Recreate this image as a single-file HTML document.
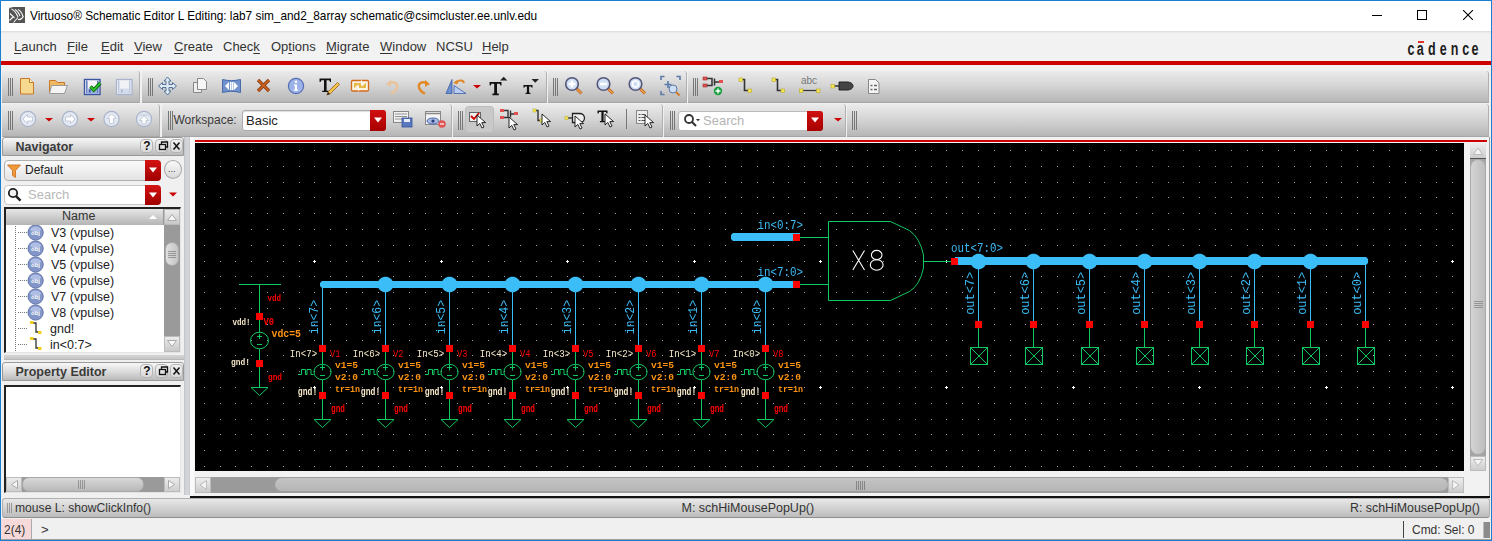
<!DOCTYPE html><html><head><meta charset="utf-8"><style>
*{box-sizing:border-box}
body{margin:0;width:1492px;height:541px;overflow:hidden;position:relative;background:#f0f0f0;font-family:'Liberation Sans', sans-serif;color:#222}
.a{position:absolute}
.tb{position:absolute;background:linear-gradient(#ebebeb,#d6d6d6 45%,#b6b6b6);border-bottom:1px solid #a6a6a6;border-right:1px solid #b0b0b0;border-radius:3px 3px 0 0}
.grip{position:absolute;width:5px;border-left:1px solid #777;border-right:1px solid #777}
.grip:after{content:'';position:absolute;left:1px;top:0;bottom:0;width:1px;background:#777}
.menu span{position:absolute;top:0;font-size:13px;color:#333}
.u{text-decoration:underline;text-underline-offset:2px}
.hdr{position:absolute;background:linear-gradient(#f7f7f7,#dcdcdc 50%,#bababa);border:1px solid #9a9a9a;border-radius:3px;font-weight:bold;font-size:12.5px;color:#3a3a3a}
.sbtn{position:absolute;width:15px;height:15px;border:1px solid #999;border-radius:3px;background:linear-gradient(#fafafa,#d6d6d6)}
</style></head><body>

<div class="a" style="left:0;top:0;width:1492px;height:541px;border:1px solid #1a7fd0;z-index:50;pointer-events:none"></div>
<div class="a" style="left:0;top:0;width:1492px;height:31px;background:#fff"></div>
<div class="a" style="left:0;top:31px;width:1492px;height:30px;background:linear-gradient(#d6d6d6,#e8e8e8 1px,#f2f2f2 3px)"></div>
<svg class="a" style="left:9px;top:7px" width="16" height="16" viewBox="0 0 16 16">
<rect width="16" height="16" fill="#545454"/>
<path d="M0 1.5L4 0H0z" fill="#ddd"/>
<path d="M1 6.5L5.5 11M0.5 13.5L4 10M4.5 15.5L9 10.5" stroke="#f4f4f4" stroke-width="1.1" fill="none"/>
<path d="M2.5 2C5 3 7 5 9 10M6 2.5C8 3.5 9.5 5.5 11 9M9 2.5C11 3.5 13 6 14 9.5M9 12.5C11 13 13 12 14.5 9" stroke="#f4f4f4" stroke-width="1.1" fill="none"/>
</svg>
<div class="a" style="left:30px;top:8px;font-size:13px;color:#000;white-space:nowrap;transform:scaleX(0.909);transform-origin:0 0">Virtuoso® Schematic Editor L Editing: lab7 sim_and2_8array schematic@csimcluster.ee.unlv.edu</div>
<div class="a" style="left:1372px;top:15px;width:10px;height:1px;background:#000"></div>
<div class="a" style="left:1417px;top:10px;width:10px;height:10px;border:1px solid #000"></div>
<svg class="a" style="left:1463px;top:10px" width="10" height="10" viewBox="0 0 10 10"><path d="M0 0L10 10M10 0L0 10" stroke="#000" stroke-width="1.1"/></svg>
<div class="a menu" style="left:0;top:31px;width:1492px;height:30px">
<span style="left:14px;top:8px"><span class="u" style="position:static">L</span>aunch</span>
<span style="left:67px;top:8px"><span class="u" style="position:static">F</span>ile</span>
<span style="left:101px;top:8px"><span class="u" style="position:static">E</span>dit</span>
<span style="left:134px;top:8px"><span class="u" style="position:static">V</span>iew</span>
<span style="left:174px;top:8px"><span class="u" style="position:static">C</span>reate</span>
<span style="left:223px;top:8px">Chec<span class="u" style="position:static">k</span></span>
<span style="left:271px;top:8px">Op<span class="u" style="position:static">t</span>ions</span>
<span style="left:326px;top:8px"><span class="u" style="position:static">M</span>igrate</span>
<span style="left:380px;top:8px"><span class="u" style="position:static">W</span>indow</span>
<span style="left:436px;top:8px">NCSU</span>
<span style="left:482px;top:8px"><span class="u" style="position:static">H</span>elp</span>
</div>
<svg class="a" style="left:1400px;top:34px" width="90" height="26" viewBox="1400 34 90 26"><text transform="translate(1407.4 54.8) scale(0.66 1)" font-size="19" font-weight="bold" fill="#1c1c1c" font-family="Liberation Sans">c</text><text transform="translate(1416.8 54.8) scale(0.66 1)" font-size="19" font-weight="bold" fill="#1c1c1c" font-family="Liberation Sans">a</text><text transform="translate(1427.9 54.8) scale(0.66 1)" font-size="19" font-weight="bold" fill="#1c1c1c" font-family="Liberation Sans">d</text><text transform="translate(1439.7 54.8) scale(0.66 1)" font-size="19" font-weight="bold" fill="#1c1c1c" font-family="Liberation Sans">e</text><text transform="translate(1450.8 54.8) scale(0.66 1)" font-size="19" font-weight="bold" fill="#1c1c1c" font-family="Liberation Sans">n</text><text transform="translate(1462.3 54.8) scale(0.66 1)" font-size="19" font-weight="bold" fill="#1c1c1c" font-family="Liberation Sans">c</text><text transform="translate(1471.6 54.8) scale(0.66 1)" font-size="19" font-weight="bold" fill="#1c1c1c" font-family="Liberation Sans">e</text><rect x="1418" y="41" width="6" height="2" fill="#e03030"/></svg>
<div class="a" style="left:0;top:61px;width:1492px;height:4px;background:#cc0000"></div>
<div class="tb" style="left:2px;top:71px;width:138px;height:32px"></div>
<div class="tb" style="left:142px;top:71px;width:405px;height:32px"></div>
<div class="tb" style="left:548px;top:71px;width:139px;height:32px"></div>
<div class="tb" style="left:688px;top:71px;width:801px;height:32px"></div>
<div class="grip" style="left:8px;top:78px;height:18px"></div>
<div class="grip" style="left:148px;top:78px;height:18px"></div>
<div class="grip" style="left:553px;top:78px;height:18px"></div>
<div class="grip" style="left:693px;top:78px;height:18px"></div>
<div class="tb" style="left:2px;top:104px;width:158px;height:33px"></div>
<div class="tb" style="left:162px;top:104px;width:290px;height:33px"></div>
<div class="tb" style="left:453px;top:104px;width:210px;height:33px"></div>
<div class="tb" style="left:664px;top:104px;width:182px;height:33px"></div>
<div class="tb" style="left:847px;top:104px;width:642px;height:33px"></div>
<div class="grip" style="left:8px;top:111px;height:19px"></div>
<div class="grip" style="left:168px;top:111px;height:19px"></div>
<div class="grip" style="left:458px;top:111px;height:19px"></div>
<div class="grip" style="left:670px;top:111px;height:19px"></div>
<div class="grip" style="left:852px;top:111px;height:19px"></div>
<svg class="a" style="left:0;top:0" width="1492" height="140" viewBox="0 0 1492 140"><path d="M20.5 78.5h9l4 4v11.5h-13z" fill="#f4d98f" stroke="#c8782a"/><path d="M29.5 78.5v4h4" fill="#fff3c8" stroke="#c8782a"/><path d="M49.5 80.5h6l2 2h7v10h-15z" fill="#f0b860" stroke="#c8782a"/><path d="M51.5 85.5h16l-3 8h-15z" fill="#f4f4f4" stroke="#999"/><rect x="84.5" y="79.5" width="15.5" height="15" fill="#f4f4f8" stroke="#3a56a0" stroke-width="1.4"/><rect x="86" y="80.5" width="1.6" height="13" fill="#6a82c4"/><rect x="97" y="80.5" width="1.6" height="13" fill="#6a82c4"/><rect x="87" y="88.5" width="10" height="5.5" fill="#9cb0e0"/><rect x="89" y="89.5" width="1.6" height="3" fill="#3a56a0"/><path d="M90.5 86.5l3.3 3.5 6.5-7" stroke="#0a6a0a" stroke-width="3.4" fill="none"/><path d="M90.5 86.5l3.3 3.5 6.5-7" stroke="#2ec82e" stroke-width="1.8" fill="none"/><rect x="116.5" y="79.5" width="15.5" height="15" fill="#f0f2f6" stroke="#aab4cc" stroke-width="1.3"/><rect x="118" y="80.5" width="1.5" height="13" fill="#c0cade"/><rect x="129" y="80.5" width="1.5" height="13" fill="#c0cade"/><rect x="119" y="88.5" width="10" height="5.5" fill="#d4dcec"/><rect x="121" y="89.5" width="1.5" height="3" fill="#aab4cc"/><path d="M167.5 77l3.5 4h-2v3.5h3.5v-2l4 3.5-4 3.5v-2h-3.5v3.5h2l-3.5 4-3.5-4h2v-3.5h-3.5v2l-4-3.5 4-3.5v2h3.5v-3.5h-2z" fill="#dfe8f2" stroke="#4f7499" stroke-width="1"/><path d="M193.5 82.5h8v10h-8z" fill="#eee" stroke="#888"/><path d="M197.5 78.5h6l3 3v8h-9z" fill="#f6f6f6" stroke="#888"/><path d="M222.5 79.5c6 1.5 12 1.5 18 0v13c-6-1.5-12-1.5-18 0z" fill="#6f92cf" stroke="#4a6aa8"/><path d="M225 86l4-4v8z M238 86l-4-4v8z" fill="#fff"/><rect x="230" y="82" width="1.5" height="8" fill="#fff"/><rect x="232" y="82" width="1.5" height="8" fill="#fff"/><path d="M258 80l11 11M269 80l-11 11" stroke="#8a3a10" stroke-width="3.2"/><path d="M258 80l11 11M269 80l-11 11" stroke="#d0651f" stroke-width="1.6"/><circle cx="296" cy="86" r="7.6" fill="#9db2e6" stroke="#5670b5" stroke-width="1.2"/><circle cx="296" cy="81.8" r="1.3" fill="#fff"/><path d="M294 84.5h3v5h1.2v1.3h-4.5v-1.3h1.2v-3.7h-0.9z" fill="#fff"/><path d="M319.5 78.5h11.5v3.5h-1l-0.8-1.8h-2.6v10.5h1.8v1.3h-6.2v-1.3h1.8v-10.5h-2.6l-0.8 1.8h-1z" fill="#111"/><path d="M327 95l1-3 9.5-9.5 2 2-9.5 9.5z" fill="#f3c64a" stroke="#9a5a1a" stroke-width="0.8"/><path d="M327 95l1-3 2 2z" fill="#222"/><rect x="351.5" y="80.5" width="17" height="10.5" rx="1.2" fill="#fbf4e0" stroke="#d46a1e" stroke-width="1.3"/><rect x="354" y="83" width="12" height="5" fill="#e8b848"/><path d="M361 79l1.8 4.5 3.5-1-4.5 4-1-3.5z M359 92l-1.8-4.5-3.5 1 4.5-4 1 3.5z" fill="#fff"/><path d="M389 83.5c5-3 9 0 8 4-1 3-3 5-6 6" stroke="#e8c49c" stroke-width="2.4" fill="none"/><path d="M386 84l5-4v7z" fill="#e8c49c"/><path d="M427 83.5c-5-3-9 0-8 4 1 3 3 5 6 6" stroke="#e08a2a" stroke-width="2.4" fill="none"/><path d="M430 84l-5-4v7z" fill="#e08a2a"/><path d="M446 93.5l6-14v14z" fill="#6b8fd0" stroke="#3e5ea8" stroke-width="0.8"/><path d="M454 93.5v-8l12 8z" fill="#b8cdf0" stroke="#3e5ea8" stroke-width="0.8"/><path d="M456 84c1-4 7-5 8-1" stroke="#e08a2a" stroke-width="2" fill="none"/><path d="M453 83l4 -3 1 4z" fill="#e08a2a"/><path d="M473 85h8l-4 3.5z" fill="#cc0000"/><path d="M489.5 82h12v3.5h-1l-0.8-1.8h-2.7v9.8h1.8v1.8h-6.4v-1.8h1.8v-9.8h-2.7l-0.8 1.8h-1z" fill="#111"/><path d="M500 80.5l3.7-3.7 3.7 3.7z" fill="#222"/><path d="M523.5 85h9v2.8h-0.8l-0.6-1.3h-2v6.3h1.3v1.2h-4.8v-1.2h1.3v-6.3h-2l-0.6 1.3h-0.8z" fill="#111"/><path d="M531.5 79h7.5l-3.75 3.7z" fill="#222"/><path d="M576 88l5.5 5.5" stroke="#b8621c" stroke-width="3"/><path d="M576 88l5.5 5.5" stroke="#f0a050" stroke-width="1.4"/><circle cx="572" cy="84" r="6.3" fill="#cfe0f4" stroke="#557" stroke-width="1.6"/><path d="M572 80.5v7M568.5 84h7" stroke="#fff" stroke-width="2.6"/><path d="M572 80.5v7M568.5 84h7" stroke="#4a6ab0" stroke-width="0.6" fill="none" opacity="0"/><path d="M607.5 88l5.5 5.5" stroke="#b8621c" stroke-width="3"/><path d="M607.5 88l5.5 5.5" stroke="#f0a050" stroke-width="1.4"/><circle cx="603.5" cy="84" r="6.3" fill="#cfe0f4" stroke="#557" stroke-width="1.6"/><path d="M600 84h7" stroke="#fff" stroke-width="2.6"/><path d="M639.5 88l5.5 5.5" stroke="#b8621c" stroke-width="3"/><path d="M639.5 88l5.5 5.5" stroke="#f0a050" stroke-width="1.4"/><circle cx="635.5" cy="84" r="6.3" fill="#cfe0f4" stroke="#557" stroke-width="1.6"/><circle cx="635.5" cy="84" r="3" fill="none" stroke="#fff" stroke-width="1.6"/><path d="M661 80v-3.5h3.5M676.5 76.5h3.5v3.5M661 91v3.5h3.5" stroke="#5a7aa8" stroke-width="1.6" fill="none"/><path d="M668 81v7M664.5 84.5h7" stroke="#5a7aa8" stroke-width="1.6"/><circle cx="673" cy="89" r="4" fill="#cfe0f4" stroke="#5a7aa8"/><path d="M676 92l3.5 3.5" stroke="#d07a2a" stroke-width="2"/><rect x="703" y="77" width="4" height="3" fill="#e05050" stroke="#a03030" stroke-width="0.6"/><rect x="703" y="84" width="4" height="3" fill="#e05050" stroke="#a03030" stroke-width="0.6"/><path d="M707 78.5h5v7h-5M712 78.5v7M714.5 78.5v7M714.5 82h5" stroke="#333" stroke-width="1.5" fill="none"/><rect x="719" y="80" width="4" height="3" fill="#e05050"/><circle cx="718" cy="91" r="4.2" fill="#1aa040"/><path d="M718 88.5v5M715.5 91h5" stroke="#fff" stroke-width="1.4"/><path d="M741 79.5h3.5v11h5" stroke="#333" stroke-width="1.6" fill="none"/><rect x="739" y="78" width="3.5" height="3.5" fill="#f5e65a" stroke="#b8a820" stroke-width="0.6"/><rect x="748" y="89" width="3.5" height="3.5" fill="#f5e65a" stroke="#b8a820" stroke-width="0.6"/><path d="M774 79.5h3.5v11h5" stroke="#333" stroke-width="1.6" fill="none"/><rect x="772" y="78" width="3.5" height="3.5" fill="#f5e65a" stroke="#b8a820" stroke-width="0.6"/><rect x="781" y="89" width="3.5" height="3.5" fill="#f5e65a" stroke="#b8a820" stroke-width="0.6"/><text x="801" y="84" font-size="10" fill="#777" font-family="Liberation Sans">abc</text><path d="M802 90.5h16" stroke="#333" stroke-width="1.2"/><rect x="799.5" y="89" width="3.5" height="3.5" fill="#f5e65a" stroke="#b8a820" stroke-width="0.6"/><rect x="816.5" y="89" width="3.5" height="3.5" fill="#f5e65a" stroke="#b8a820" stroke-width="0.6"/><path d="M834 86h5" stroke="#333" stroke-width="1.5"/><rect x="831" y="84.5" width="3.5" height="3.5" fill="#f5e65a" stroke="#b8a820" stroke-width="0.6"/><path d="M839 82h8c4 0 6 2 6 4s-2 4-6 4h-8z" fill="#444" stroke="#222"/><path d="M868.5 79.5h7l3.5 3.5v10.5h-10.5z" fill="#f4f4f4" stroke="#888"/><path d="M870.5 85.5h2M874 85.5h3M870.5 89.5h2M874 89.5h3" stroke="#666" stroke-width="1.6"/><circle cx="28" cy="119" r="7.6" fill="#e4e8f0" stroke="#a8b4cc" stroke-width="1.2"/><path d="M23 119l4.5-4.5v2.5h5v4h-5v2.5z" fill="#fff" stroke="#b0bad0" stroke-width="0.7"/><path d="M45 118h8l-4 3.5z" fill="#cc0000"/><circle cx="70" cy="119" r="7.6" fill="#e4e8f0" stroke="#a8b4cc" stroke-width="1.2"/><path d="M75 119l-4.5-4.5v2.5h-5v4h5v2.5z" fill="#fff" stroke="#b0bad0" stroke-width="0.7"/><path d="M87 118h8l-4 3.5z" fill="#cc0000"/><circle cx="111.5" cy="119" r="7.6" fill="#e4e8f0" stroke="#a8b4cc" stroke-width="1.2"/><path d="M111.5 114l4.5 4.5h-2.5v5h-4v-5h-2.5z" fill="#fff" stroke="#b0bad0" stroke-width="0.7"/><circle cx="144" cy="119" r="7.6" fill="#e4e8f0" stroke="#a8b4cc" stroke-width="1.2"/><path d="M139.5 115h9M144 116l4.5 4.5h-2.5v3.5h-4v-3.5h-2.5z" fill="#fff" stroke="#b0bad0" stroke-width="0.7"/><rect x="393.5" y="111.5" width="15" height="11" fill="#f2f2f2" stroke="#888"/><path d="M395 114h12M395 116.5h12M395 119h9" stroke="#888" stroke-width="0.9"/><rect x="402" y="118" width="10" height="9" fill="#5a78c0" stroke="#34509a" stroke-width="0.8"/><rect x="404" y="119" width="6" height="3" fill="#e8eef8"/><rect x="425.5" y="111.5" width="15" height="13" fill="#f4f4f4" stroke="#888"/><path d="M425.5 113.5h15" stroke="#888" stroke-width="1.5"/><ellipse cx="433" cy="121" rx="6" ry="3" fill="#a8b8e0" stroke="#4a6ab0"/><circle cx="433" cy="121" r="1.6" fill="#2a3a80"/><circle cx="442" cy="124" r="3.8" fill="#e05555"/><path d="M440 124h4" stroke="#fff" stroke-width="1.2"/><rect x="465.5" y="106.5" width="28" height="26" rx="3" fill="#c9c9c9" stroke="#bdbdbd"/><rect x="469.5" y="112.5" width="11" height="9" fill="#f0f0f0" stroke="#666"/><path d="M471 116l3 3 5-6" stroke="#cc0000" stroke-width="1.8" fill="none"/><path d="M477 115v11l2.8-2.6 2.2 4.6 2-1-2.2-4.4h3.8z" fill="#fff" stroke="#111" stroke-width="0.9"/><rect x="500" y="109" width="4" height="3" fill="#e05050"/><rect x="500" y="116" width="4" height="3" fill="#e05050"/><path d="M504 110.5h4v7h-4M508 110.5v7M510.5 110.5v7M510.5 114h4" stroke="#333" stroke-width="1.4" fill="none"/><rect x="514" y="112" width="4" height="3" fill="#e05050"/><path d="M509 117v11l2.8-2.6 2.2 4.6 2-1-2.2-4.4h3.8z" fill="#fff" stroke="#111" stroke-width="0.9"/><path d="M535 110.5h3v10h3" stroke="#333" stroke-width="1.4" fill="none"/><rect x="533" y="109" width="3" height="3" fill="#f5e65a" stroke="#b8a820" stroke-width="0.5"/><rect x="540" y="119" width="3" height="3" fill="#f5e65a" stroke="#b8a820" stroke-width="0.5"/><path d="M542 114v11l2.8-2.6 2.2 4.6 2-1-2.2-4.4h3.8z" fill="#fff" stroke="#111" stroke-width="0.9"/><path d="M568 118h5" stroke="#333" stroke-width="1.4"/><rect x="565" y="116.5" width="3" height="3" fill="#f5e65a" stroke="#b8a820" stroke-width="0.5"/><path d="M572.5 113.5h7c3 0 5 2 5 4.5s-2 4.5-5 4.5h-7z" fill="#eee" stroke="#222" stroke-width="1.3"/><path d="M575 116v11l2.8-2.6 2.2 4.6 2-1-2.2-4.4h3.8z" fill="#fff" stroke="#111" stroke-width="0.9"/><path d="M597.5 110.5h10v3h-1l-0.6-1.5h-2.3v9h1.5v1.2h-5.2v-1.2h1.5v-9h-2.3l-0.6 1.5h-1z" fill="#111"/><path d="M605 114v11l2.8-2.6 2.2 4.6 2-1-2.2-4.4h3.8z" fill="#fff" stroke="#111" stroke-width="0.9"/><rect x="626" y="109" width="1" height="20" fill="#777"/><rect x="636.5" y="110.5" width="11" height="13" fill="#eee" stroke="#888"/><path d="M638.5 114.5h2M641.5 114.5h4M638.5 117.5h2M641.5 117.5h4M638.5 120.5h2M641.5 120.5h4" stroke="#555" stroke-width="1.2"/><path d="M645 115v11l2.8-2.6 2.2 4.6 2-1-2.2-4.4h3.8z" fill="#fff" stroke="#111" stroke-width="0.9"/><path d="M834 118h8l-4 3.5z" fill="#cc0000"/></svg>
<div class="a" style="left:173.5px;top:112.5px;font-size:12px;color:#3a3a3a">Workspace:</div>
<div class="a" style="left:242px;top:110px;width:144px;height:21px;background:#fff;border:1px solid #aaa;border-radius:3px;box-shadow:inset 0 1px 1px #ddd"></div>
<div class="a" style="left:246px;top:113px;font-size:13px;color:#222">Basic</div>
<div class="a" style="left:370px;top:110px;width:16px;height:21px;background:linear-gradient(#d01010,#a80000);border-radius:0 3px 3px 0"></div>
<svg class="a" style="left:373px;top:117px" width="10" height="6"><path d="M1 0.5h8l-4 5z" fill="#fff"/></svg>
<div class="a" style="left:678px;top:111px;width:145px;height:20px;background:#fff;border:1px solid #bbb;border-radius:3px"></div>
<svg class="a" style="left:683px;top:113px" width="18" height="15"><circle cx="6" cy="6" r="4" fill="none" stroke="#333" stroke-width="1.8"/><path d="M9 9l4 4" stroke="#333" stroke-width="2.2"/><path d="M13 6h4l-2 2.2z" fill="#333"/></svg>
<div class="a" style="left:703px;top:113px;font-size:13px;color:#b4b4b4">Search</div>
<div class="a" style="left:807px;top:111px;width:16px;height:20px;background:linear-gradient(#d01010,#a80000);border-radius:0 3px 3px 0"></div>
<svg class="a" style="left:810px;top:117px" width="10" height="6"><path d="M1 0.5h8l-4 5z" fill="#fff"/></svg>
<div class="hdr" style="left:2px;top:137px;width:182px;height:19px;border-radius:3px 3px 0 0"><span class="a" style="left:12.5px;top:2px">Navigator</span></div>
<div class="sbtn" style="left:139.5px;top:139px;width:13px;height:14px;border-radius:4px;border-color:#b4b4b4;background:linear-gradient(#f2f2f2,#d8d8d8)"></div>
<div class="sbtn" style="left:154.5px;top:139px;width:13px;height:14px;border-radius:4px;border-color:#b4b4b4;background:linear-gradient(#f2f2f2,#d8d8d8)"></div>
<div class="sbtn" style="left:169.5px;top:139px;width:13px;height:14px;border-radius:4px;border-color:#b4b4b4;background:linear-gradient(#f2f2f2,#d8d8d8)"></div>
<svg class="a" style="left:140px;top:139px" width="44" height="14" viewBox="0 0 44 14">
<text x="3.2" y="11.2" font-size="12" font-weight="bold" fill="#111" font-family="Liberation Sans">?</text>
<rect x="19.5" y="5.5" width="6" height="5" fill="none" stroke="#111" stroke-width="1.3"/><path d="M21.5 5.5v-2.5h6v5h-2" fill="none" stroke="#111" stroke-width="1.3"/>
<path d="M33.5 3.5l6 7M39.5 3.5l-6 7" stroke="#111" stroke-width="1.5"/></svg>
<div class="a" style="left:4px;top:160px;width:157px;height:21px;border:1px solid #b0b0b0;border-radius:4px;background:linear-gradient(#fafafa,#e4e4e4)"></div>
<svg class="a" style="left:6px;top:163px" width="16" height="16"><path d="M1.5 2h13l-5 5.5v7l-3-2v-5z" fill="#f09a3a" stroke="#c86a1a" stroke-width="0.8"/></svg>
<div class="a" style="left:25px;top:163px;font-size:12px;color:#222">Default</div>
<div class="a" style="left:145px;top:160px;width:16px;height:21px;background:linear-gradient(#d41212,#a00000);border-radius:0 4px 4px 0"></div>
<svg class="a" style="left:148px;top:167px" width="10" height="6"><path d="M1 0.5h8l-4 5z" fill="#fff"/></svg>
<div class="a" style="left:164px;top:160px;width:18px;height:19px;border:1px solid #a8a8a8;border-radius:50%;background:linear-gradient(#fafafa,#d8d8d8)"><span class="a" style="left:3px;top:3px;font-size:9px;color:#333">...</span></div>
<div class="a" style="left:4px;top:185px;width:157px;height:20px;border:1px solid #c8c8c8;border-radius:4px;background:#fff"></div>
<svg class="a" style="left:7px;top:187px" width="16" height="16"><circle cx="6" cy="6" r="4.2" fill="#f4f4f4" stroke="#222" stroke-width="1.8"/><path d="M9 9.2l4.5 4.5" stroke="#222" stroke-width="2.4"/></svg>
<div class="a" style="left:28px;top:187px;font-size:13px;color:#b8b8b8">Search</div>
<div class="a" style="left:145px;top:185px;width:16px;height:20px;background:linear-gradient(#d41212,#a00000);border-radius:0 4px 4px 0"></div>
<svg class="a" style="left:148px;top:192px" width="10" height="6"><path d="M1 0.5h8l-4 5z" fill="#fff"/></svg>
<svg class="a" style="left:168px;top:192px" width="10" height="6"><path d="M1 0.5h8l-4 4z" fill="#cc0000"/></svg>
<div class="a" style="left:4px;top:207px;width:177px;height:146px;background:#fff;border:1px solid #e4e4e4;border-top:2px solid #222;border-left:2px solid #222"></div>
<div class="a" style="left:6px;top:209px;width:158px;height:16px;background:linear-gradient(#e6e6e6,#b4b4b4);border-right:1px solid #999"><span class="a" style="left:56px;top:0px;font-size:12.5px;color:#333">Name</span></div>
<svg class="a" style="left:148px;top:213px" width="10" height="8"><path d="M1 6l4-4 4 4z" fill="#fff"/></svg>
<div class="a" style="left:164px;top:209px;width:16px;height:143px;background:#9a9a9a"></div>
<div class="a" style="left:164px;top:209px;width:16px;height:16px;background:linear-gradient(#ececec,#c8c8c8);border:1px solid #bbb"></div>
<svg class="a" style="left:166px;top:212px" width="12" height="10"><path d="M1.5 8.5l4.5-6 4.5 6z" fill="#f8f8f8" stroke="#aaa"/></svg>
<div class="a" style="left:164px;top:336px;width:16px;height:16px;background:linear-gradient(#ececec,#c8c8c8);border:1px solid #bbb"></div>
<svg class="a" style="left:166px;top:339px" width="12" height="10"><path d="M1.5 1.5l4.5 6 4.5-6z" fill="#f8f8f8" stroke="#aaa"/></svg>
<div class="a" style="left:165px;top:242px;width:14px;height:24px;border-radius:7px;background:linear-gradient(90deg,#e0e0e0,#c4c4c4);border:1px solid #aaa"></div>
<svg class="a" style="left:168px;top:250px" width="8" height="9"><path d="M0 1.5h8M0 3.5h8M0 5.5h8M0 7.5h8" stroke="#888" stroke-width="0.8"/></svg>
<svg class="a" style="left:0;top:0" width="200" height="541" viewBox="0 0 200 541"><clipPath id="tc"><rect x="6" y="225" width="158" height="127"/></clipPath><g clip-path="url(#tc)"><path d="M15.5 224v16" stroke="#777" stroke-dasharray="1 1" stroke-width="1"/><path d="M18 232.5h9" stroke="#777" stroke-dasharray="1 1" stroke-width="1"/><circle cx="35.6" cy="232.5" r="7.6" fill="#8296c8" stroke="#6074a8" stroke-width="1"/><ellipse cx="35.6" cy="229.5" rx="5.2" ry="3" fill="#b4c2e4" opacity="0.9"/><text x="31" y="234.5" font-size="6" fill="#fff" font-family="Liberation Sans" font-weight="bold">obj</text><text x="51" y="236.5" font-size="12.5" fill="#222" font-family="Liberation Sans">V3 (vpulse)</text><path d="M15.5 240v16" stroke="#777" stroke-dasharray="1 1" stroke-width="1"/><path d="M18 248.5h9" stroke="#777" stroke-dasharray="1 1" stroke-width="1"/><circle cx="35.6" cy="248.5" r="7.6" fill="#8296c8" stroke="#6074a8" stroke-width="1"/><ellipse cx="35.6" cy="245.5" rx="5.2" ry="3" fill="#b4c2e4" opacity="0.9"/><text x="31" y="250.5" font-size="6" fill="#fff" font-family="Liberation Sans" font-weight="bold">obj</text><text x="51" y="252.5" font-size="12.5" fill="#222" font-family="Liberation Sans">V4 (vpulse)</text><path d="M15.5 256v16" stroke="#777" stroke-dasharray="1 1" stroke-width="1"/><path d="M18 264.5h9" stroke="#777" stroke-dasharray="1 1" stroke-width="1"/><circle cx="35.6" cy="264.5" r="7.6" fill="#8296c8" stroke="#6074a8" stroke-width="1"/><ellipse cx="35.6" cy="261.5" rx="5.2" ry="3" fill="#b4c2e4" opacity="0.9"/><text x="31" y="266.5" font-size="6" fill="#fff" font-family="Liberation Sans" font-weight="bold">obj</text><text x="51" y="268.5" font-size="12.5" fill="#222" font-family="Liberation Sans">V5 (vpulse)</text><path d="M15.5 272v16" stroke="#777" stroke-dasharray="1 1" stroke-width="1"/><path d="M18 280.5h9" stroke="#777" stroke-dasharray="1 1" stroke-width="1"/><circle cx="35.6" cy="280.5" r="7.6" fill="#8296c8" stroke="#6074a8" stroke-width="1"/><ellipse cx="35.6" cy="277.5" rx="5.2" ry="3" fill="#b4c2e4" opacity="0.9"/><text x="31" y="282.5" font-size="6" fill="#fff" font-family="Liberation Sans" font-weight="bold">obj</text><text x="51" y="284.5" font-size="12.5" fill="#222" font-family="Liberation Sans">V6 (vpulse)</text><path d="M15.5 288v16" stroke="#777" stroke-dasharray="1 1" stroke-width="1"/><path d="M18 296.5h9" stroke="#777" stroke-dasharray="1 1" stroke-width="1"/><circle cx="35.6" cy="296.5" r="7.6" fill="#8296c8" stroke="#6074a8" stroke-width="1"/><ellipse cx="35.6" cy="293.5" rx="5.2" ry="3" fill="#b4c2e4" opacity="0.9"/><text x="31" y="298.5" font-size="6" fill="#fff" font-family="Liberation Sans" font-weight="bold">obj</text><text x="51" y="300.5" font-size="12.5" fill="#222" font-family="Liberation Sans">V7 (vpulse)</text><path d="M15.5 304v16" stroke="#777" stroke-dasharray="1 1" stroke-width="1"/><path d="M18 312.5h9" stroke="#777" stroke-dasharray="1 1" stroke-width="1"/><circle cx="35.6" cy="312.5" r="7.6" fill="#8296c8" stroke="#6074a8" stroke-width="1"/><ellipse cx="35.6" cy="309.5" rx="5.2" ry="3" fill="#b4c2e4" opacity="0.9"/><text x="31" y="314.5" font-size="6" fill="#fff" font-family="Liberation Sans" font-weight="bold">obj</text><text x="51" y="316.5" font-size="12.5" fill="#222" font-family="Liberation Sans">V8 (vpulse)</text><path d="M15.5 320v16" stroke="#777" stroke-dasharray="1 1" stroke-width="1"/><path d="M18 328.5h9" stroke="#777" stroke-dasharray="1 1" stroke-width="1"/><path d="M33 323h3v9h3.5" stroke="#333" stroke-width="1.3" fill="none"/><rect x="30" y="321" width="3.5" height="3" fill="#f0d020"/><rect x="38" y="331" width="3.5" height="3" fill="#f0d020"/><text x="50" y="332.5" font-size="12.5" fill="#222" font-family="Liberation Sans">gnd!</text><path d="M15.5 336v16" stroke="#777" stroke-dasharray="1 1" stroke-width="1"/><path d="M18 344.5h9" stroke="#777" stroke-dasharray="1 1" stroke-width="1"/><path d="M33 339h3v9h3.5" stroke="#333" stroke-width="1.3" fill="none"/><rect x="30" y="337" width="3.5" height="3" fill="#f0d020"/><rect x="38" y="347" width="3.5" height="3" fill="#f0d020"/><text x="50" y="348.5" font-size="12.5" fill="#222" font-family="Liberation Sans">in&lt;0:7&gt;</text></g></svg>
<div class="a" style="left:4px;top:355px;width:180px;height:5px;background:linear-gradient(#d6d6d6,#c4c4c4);border-bottom:1px solid #b8b8b8"></div>
<div class="hdr" style="left:2px;top:362px;width:182px;height:19px;border-radius:3px 3px 0 0"><span class="a" style="left:12.5px;top:2px">Property Editor</span></div>
<div class="sbtn" style="left:139.5px;top:364px;width:13px;height:14px;border-radius:4px;border-color:#b4b4b4;background:linear-gradient(#f2f2f2,#d8d8d8)"></div>
<div class="sbtn" style="left:154.5px;top:364px;width:13px;height:14px;border-radius:4px;border-color:#b4b4b4;background:linear-gradient(#f2f2f2,#d8d8d8)"></div>
<div class="sbtn" style="left:169.5px;top:364px;width:13px;height:14px;border-radius:4px;border-color:#b4b4b4;background:linear-gradient(#f2f2f2,#d8d8d8)"></div>
<svg class="a" style="left:140px;top:364px" width="44" height="14" viewBox="0 0 44 14">
<text x="3.2" y="11.2" font-size="12" font-weight="bold" fill="#111" font-family="Liberation Sans">?</text>
<rect x="19.5" y="5.5" width="6" height="5" fill="none" stroke="#111" stroke-width="1.3"/><path d="M21.5 5.5v-2.5h6v5h-2" fill="none" stroke="#111" stroke-width="1.3"/>
<path d="M33.5 3.5l6 7M39.5 3.5l-6 7" stroke="#111" stroke-width="1.5"/></svg>
<div class="a" style="left:4px;top:385px;width:177px;height:108px;background:#fff;border:1px solid #e4e4e4;border-top:2px solid #222;border-left:2px solid #222"></div>
<div class="a" style="left:6px;top:477px;width:174px;height:15px;background:#9a9a9a"></div>
<div class="a" style="left:6px;top:477px;width:16px;height:15px;background:linear-gradient(#ececec,#cfcfcf);border:1px solid #bbb"></div>
<svg class="a" style="left:8px;top:479px" width="12" height="11"><path d="M9.5 1.5l-6 4 6 4z" fill="#f8f8f8" stroke="#aaa"/></svg>
<div class="a" style="left:164px;top:477px;width:16px;height:15px;background:linear-gradient(#ececec,#cfcfcf);border:1px solid #bbb"></div>
<svg class="a" style="left:166px;top:479px" width="12" height="11"><path d="M2.5 1.5l6 4-6 4z" fill="#f8f8f8" stroke="#aaa"/></svg>
<div class="a" style="left:22px;top:477px;width:122px;height:15px;border-radius:7px;background:linear-gradient(#d8d8d8,#b8b8b8);border:1px solid #a8a8a8"></div>
<svg class="a" style="left:77px;top:480px" width="10" height="9"><path d="M1.5 0v9M3.5 0v9M5.5 0v9M7.5 0v9" stroke="#888" stroke-width="0.8"/></svg>
<div class="a" style="left:184px;top:137px;width:6px;height:358px;background:linear-gradient(90deg,#bfc2c8,#d3d5da 35%,#d3d5da 75%,#c2c4c9)"></div>
<div class="a" style="left:190px;top:137px;width:1300px;height:359px;background:#f2f2f2;border-right:1px solid #9a9a9a"></div>
<div class="a" style="left:190px;top:137px;width:4px;height:359px;background:#fafafa"></div>
<div class="a" style="left:195px;top:140px;width:1292px;height:2px;background:#cc0000"></div>
<div class="a" style="left:190px;top:496px;width:1300px;height:2px;background:#111"></div>
<div class="a" style="left:1470px;top:143px;width:16px;height:328px;background:#a4a4a4"></div>
<div class="a" style="left:1470px;top:143px;width:16px;height:16px;background:linear-gradient(#eeeeee,#cccccc);border-bottom:1px solid #555"></div>
<svg class="a" style="left:1472px;top:146px" width="12" height="10"><path d="M1.5 8.5l4.5-6.5 4.5 6.5z" fill="#f4f4f4" stroke="#bbb"/></svg>
<div class="a" style="left:1470px;top:159px;width:16px;height:296px;border-radius:8px;background:linear-gradient(90deg,#d4d4d4,#bdbdbd);border:1px solid #aaa"></div>
<svg class="a" style="left:1474px;top:300px" width="9" height="9"><path d="M0 1.5h9M0 3.5h9M0 5.5h9M0 7.5h9" stroke="#888" stroke-width="0.8"/></svg>
<div class="a" style="left:1470px;top:456px;width:16px;height:15px;background:linear-gradient(#eeeeee,#cccccc);border:1px solid #bbb"></div>
<svg class="a" style="left:1472px;top:458px" width="12" height="10"><path d="M1.5 1.5l4.5 6.5 4.5-6.5z" fill="#f4f4f4" stroke="#bbb"/></svg>
<div class="a" style="left:195px;top:477px;width:1269px;height:16px;background:#9a9a9a"></div>
<div class="a" style="left:195px;top:477px;width:16px;height:16px;background:linear-gradient(#eeeeee,#cccccc);border:1px solid #bbb"></div>
<svg class="a" style="left:197px;top:479px" width="12" height="12"><path d="M9.5 1.5l-6.5 4.5 6.5 4.5z" fill="#f4f4f4" stroke="#bbb"/></svg>
<div class="a" style="left:1448px;top:477px;width:16px;height:16px;background:linear-gradient(#eeeeee,#cccccc);border:1px solid #bbb"></div>
<svg class="a" style="left:1450px;top:479px" width="12" height="12"><path d="M2.5 1.5l6.5 4.5-6.5 4.5z" fill="#f4f4f4" stroke="#bbb"/></svg>
<div class="a" style="left:274px;top:477px;width:1174px;height:16px;border-radius:8px;background:linear-gradient(#c4c4c4,#b6b6b6);border:1px solid #9c9c9c;border-width:1px 0 2px 1px"></div>
<svg class="a" style="left:856px;top:481px" width="9" height="9"><path d="M0.5 0v9M2.5 0v9M4.5 0v9M6.5 0v9M8.5 0v9" stroke="#777" stroke-width="0.8"/></svg>
<div class="a" style="left:2px;top:498px;width:1488px;height:20px;background:linear-gradient(#e8e8e8,#bcbcbc);border:1px solid #b0b0b0;border-bottom-color:#8e8e8e;border-radius:3px"></div>
<div class="a" style="left:1px;top:539px;width:1490px;height:1px;background:#a0a0a0"></div>
<svg class="a" style="left:7px;top:503px" width="6" height="10"><path d="M0.5 0v10M2.5 0v10M4.5 0v10" stroke="#888" stroke-width="0.8"/></svg>
<div class="a" style="left:15px;top:500.5px;font-size:12.5px;color:#333;white-space:nowrap;transform:scaleX(0.97);transform-origin:0 0">mouse L: showClickInfo()</div>
<div class="a" style="left:681.5px;top:500.5px;font-size:12.5px;color:#333;white-space:nowrap">M: schHiMousePopUp()</div>
<div class="a" style="left:1349.5px;top:500.5px;font-size:12.5px;color:#333;white-space:nowrap;transform:scaleX(0.99);transform-origin:0 0">R: schHiMousePopUp()</div>
<div class="a" style="left:1px;top:519px;width:30px;height:20px;background:#f7d9d9"></div>
<div class="a" style="left:31px;top:519px;width:1px;height:20px;background:#aaa"></div>
<div class="a" style="left:3.5px;top:521.5px;font-size:13px;color:#333;transform:scaleX(0.92);transform-origin:0 0">2(4)</div>
<div class="a" style="left:41px;top:521.5px;font-size:13px;color:#333">&gt;</div>
<div class="a" style="left:1403px;top:521px;width:1px;height:17px;background:#444"></div>
<div class="a" style="left:1411.5px;top:521.8px;font-size:13px;color:#333;white-space:nowrap;transform:scaleX(0.92);transform-origin:0 0">Cmd: Sel: 0</div>
<div class="a" style="left:1483px;top:522px;width:7px;height:16px;background:#8c8c8c;border-left:1px solid #bbb"></div>
<svg class="a" style="left:195px;top:143px;background:#000;will-change:transform" width="1269" height="328" viewBox="195 143 1269 328"><path d="M204 150h1v1h-1zM204 166h1v1h-1zM204 182h1v1h-1zM204 197h1v1h-1zM204 213h1v1h-1zM204 229h1v1h-1zM204 245h1v1h-1zM204 261h1v1h-1zM204 276h1v1h-1zM204 292h1v1h-1zM204 308h1v1h-1zM204 324h1v1h-1zM204 340h1v1h-1zM204 355h1v1h-1zM204 371h1v1h-1zM204 387h1v1h-1zM204 403h1v1h-1zM204 419h1v1h-1zM204 434h1v1h-1zM204 450h1v1h-1zM204 466h1v1h-1zM220 150h1v1h-1zM220 166h1v1h-1zM220 182h1v1h-1zM220 197h1v1h-1zM220 213h1v1h-1zM220 229h1v1h-1zM220 245h1v1h-1zM220 261h1v1h-1zM220 276h1v1h-1zM220 292h1v1h-1zM220 308h1v1h-1zM220 324h1v1h-1zM220 340h1v1h-1zM220 355h1v1h-1zM220 371h1v1h-1zM220 387h1v1h-1zM220 403h1v1h-1zM220 419h1v1h-1zM220 434h1v1h-1zM220 450h1v1h-1zM220 466h1v1h-1zM235 150h1v1h-1zM235 166h1v1h-1zM235 182h1v1h-1zM235 197h1v1h-1zM235 213h1v1h-1zM235 229h1v1h-1zM235 245h1v1h-1zM235 261h1v1h-1zM235 276h1v1h-1zM235 292h1v1h-1zM235 308h1v1h-1zM235 324h1v1h-1zM235 340h1v1h-1zM235 355h1v1h-1zM235 371h1v1h-1zM235 387h1v1h-1zM235 403h1v1h-1zM235 419h1v1h-1zM235 434h1v1h-1zM235 450h1v1h-1zM235 466h1v1h-1zM251 150h1v1h-1zM251 166h1v1h-1zM251 182h1v1h-1zM251 197h1v1h-1zM251 213h1v1h-1zM251 229h1v1h-1zM251 245h1v1h-1zM251 261h1v1h-1zM251 276h1v1h-1zM251 292h1v1h-1zM251 308h1v1h-1zM251 324h1v1h-1zM251 340h1v1h-1zM251 355h1v1h-1zM251 371h1v1h-1zM251 387h1v1h-1zM251 403h1v1h-1zM251 419h1v1h-1zM251 434h1v1h-1zM251 450h1v1h-1zM251 466h1v1h-1zM267 150h1v1h-1zM267 166h1v1h-1zM267 182h1v1h-1zM267 197h1v1h-1zM267 213h1v1h-1zM267 229h1v1h-1zM267 245h1v1h-1zM267 261h1v1h-1zM267 276h1v1h-1zM267 292h1v1h-1zM267 308h1v1h-1zM267 324h1v1h-1zM267 340h1v1h-1zM267 355h1v1h-1zM267 371h1v1h-1zM267 387h1v1h-1zM267 403h1v1h-1zM267 419h1v1h-1zM267 434h1v1h-1zM267 450h1v1h-1zM267 466h1v1h-1zM283 150h1v1h-1zM283 166h1v1h-1zM283 182h1v1h-1zM283 197h1v1h-1zM283 213h1v1h-1zM283 229h1v1h-1zM283 245h1v1h-1zM283 261h1v1h-1zM283 276h1v1h-1zM283 292h1v1h-1zM283 308h1v1h-1zM283 324h1v1h-1zM283 340h1v1h-1zM283 355h1v1h-1zM283 371h1v1h-1zM283 387h1v1h-1zM283 403h1v1h-1zM283 419h1v1h-1zM283 434h1v1h-1zM283 450h1v1h-1zM283 466h1v1h-1zM299 150h1v1h-1zM299 166h1v1h-1zM299 182h1v1h-1zM299 197h1v1h-1zM299 213h1v1h-1zM299 229h1v1h-1zM299 245h1v1h-1zM299 261h1v1h-1zM299 276h1v1h-1zM299 292h1v1h-1zM299 308h1v1h-1zM299 324h1v1h-1zM299 340h1v1h-1zM299 355h1v1h-1zM299 371h1v1h-1zM299 387h1v1h-1zM299 403h1v1h-1zM299 419h1v1h-1zM299 434h1v1h-1zM299 450h1v1h-1zM299 466h1v1h-1zM314 150h1v1h-1zM314 166h1v1h-1zM314 182h1v1h-1zM314 197h1v1h-1zM314 213h1v1h-1zM314 229h1v1h-1zM314 245h1v1h-1zM314 261h1v1h-1zM314 276h1v1h-1zM314 292h1v1h-1zM314 308h1v1h-1zM314 324h1v1h-1zM314 340h1v1h-1zM314 355h1v1h-1zM314 371h1v1h-1zM314 387h1v1h-1zM314 403h1v1h-1zM314 419h1v1h-1zM314 434h1v1h-1zM314 450h1v1h-1zM314 466h1v1h-1zM330 150h1v1h-1zM330 166h1v1h-1zM330 182h1v1h-1zM330 197h1v1h-1zM330 213h1v1h-1zM330 229h1v1h-1zM330 245h1v1h-1zM330 261h1v1h-1zM330 276h1v1h-1zM330 292h1v1h-1zM330 308h1v1h-1zM330 324h1v1h-1zM330 340h1v1h-1zM330 355h1v1h-1zM330 371h1v1h-1zM330 387h1v1h-1zM330 403h1v1h-1zM330 419h1v1h-1zM330 434h1v1h-1zM330 450h1v1h-1zM330 466h1v1h-1zM346 150h1v1h-1zM346 166h1v1h-1zM346 182h1v1h-1zM346 197h1v1h-1zM346 213h1v1h-1zM346 229h1v1h-1zM346 245h1v1h-1zM346 261h1v1h-1zM346 276h1v1h-1zM346 292h1v1h-1zM346 308h1v1h-1zM346 324h1v1h-1zM346 340h1v1h-1zM346 355h1v1h-1zM346 371h1v1h-1zM346 387h1v1h-1zM346 403h1v1h-1zM346 419h1v1h-1zM346 434h1v1h-1zM346 450h1v1h-1zM346 466h1v1h-1zM362 150h1v1h-1zM362 166h1v1h-1zM362 182h1v1h-1zM362 197h1v1h-1zM362 213h1v1h-1zM362 229h1v1h-1zM362 245h1v1h-1zM362 261h1v1h-1zM362 276h1v1h-1zM362 292h1v1h-1zM362 308h1v1h-1zM362 324h1v1h-1zM362 340h1v1h-1zM362 355h1v1h-1zM362 371h1v1h-1zM362 387h1v1h-1zM362 403h1v1h-1zM362 419h1v1h-1zM362 434h1v1h-1zM362 450h1v1h-1zM362 466h1v1h-1zM378 150h1v1h-1zM378 166h1v1h-1zM378 182h1v1h-1zM378 197h1v1h-1zM378 213h1v1h-1zM378 229h1v1h-1zM378 245h1v1h-1zM378 261h1v1h-1zM378 276h1v1h-1zM378 292h1v1h-1zM378 308h1v1h-1zM378 324h1v1h-1zM378 340h1v1h-1zM378 355h1v1h-1zM378 371h1v1h-1zM378 387h1v1h-1zM378 403h1v1h-1zM378 419h1v1h-1zM378 434h1v1h-1zM378 450h1v1h-1zM378 466h1v1h-1zM393 150h1v1h-1zM393 166h1v1h-1zM393 182h1v1h-1zM393 197h1v1h-1zM393 213h1v1h-1zM393 229h1v1h-1zM393 245h1v1h-1zM393 261h1v1h-1zM393 276h1v1h-1zM393 292h1v1h-1zM393 308h1v1h-1zM393 324h1v1h-1zM393 340h1v1h-1zM393 355h1v1h-1zM393 371h1v1h-1zM393 387h1v1h-1zM393 403h1v1h-1zM393 419h1v1h-1zM393 434h1v1h-1zM393 450h1v1h-1zM393 466h1v1h-1zM409 150h1v1h-1zM409 166h1v1h-1zM409 182h1v1h-1zM409 197h1v1h-1zM409 213h1v1h-1zM409 229h1v1h-1zM409 245h1v1h-1zM409 261h1v1h-1zM409 276h1v1h-1zM409 292h1v1h-1zM409 308h1v1h-1zM409 324h1v1h-1zM409 340h1v1h-1zM409 355h1v1h-1zM409 371h1v1h-1zM409 387h1v1h-1zM409 403h1v1h-1zM409 419h1v1h-1zM409 434h1v1h-1zM409 450h1v1h-1zM409 466h1v1h-1zM425 150h1v1h-1zM425 166h1v1h-1zM425 182h1v1h-1zM425 197h1v1h-1zM425 213h1v1h-1zM425 229h1v1h-1zM425 245h1v1h-1zM425 261h1v1h-1zM425 276h1v1h-1zM425 292h1v1h-1zM425 308h1v1h-1zM425 324h1v1h-1zM425 340h1v1h-1zM425 355h1v1h-1zM425 371h1v1h-1zM425 387h1v1h-1zM425 403h1v1h-1zM425 419h1v1h-1zM425 434h1v1h-1zM425 450h1v1h-1zM425 466h1v1h-1zM441 150h1v1h-1zM441 166h1v1h-1zM441 182h1v1h-1zM441 197h1v1h-1zM441 213h1v1h-1zM441 229h1v1h-1zM441 245h1v1h-1zM441 261h1v1h-1zM441 276h1v1h-1zM441 292h1v1h-1zM441 308h1v1h-1zM441 324h1v1h-1zM441 340h1v1h-1zM441 355h1v1h-1zM441 371h1v1h-1zM441 387h1v1h-1zM441 403h1v1h-1zM441 419h1v1h-1zM441 434h1v1h-1zM441 450h1v1h-1zM441 466h1v1h-1zM457 150h1v1h-1zM457 166h1v1h-1zM457 182h1v1h-1zM457 197h1v1h-1zM457 213h1v1h-1zM457 229h1v1h-1zM457 245h1v1h-1zM457 261h1v1h-1zM457 276h1v1h-1zM457 292h1v1h-1zM457 308h1v1h-1zM457 324h1v1h-1zM457 340h1v1h-1zM457 355h1v1h-1zM457 371h1v1h-1zM457 387h1v1h-1zM457 403h1v1h-1zM457 419h1v1h-1zM457 434h1v1h-1zM457 450h1v1h-1zM457 466h1v1h-1zM472 150h1v1h-1zM472 166h1v1h-1zM472 182h1v1h-1zM472 197h1v1h-1zM472 213h1v1h-1zM472 229h1v1h-1zM472 245h1v1h-1zM472 261h1v1h-1zM472 276h1v1h-1zM472 292h1v1h-1zM472 308h1v1h-1zM472 324h1v1h-1zM472 340h1v1h-1zM472 355h1v1h-1zM472 371h1v1h-1zM472 387h1v1h-1zM472 403h1v1h-1zM472 419h1v1h-1zM472 434h1v1h-1zM472 450h1v1h-1zM472 466h1v1h-1zM488 150h1v1h-1zM488 166h1v1h-1zM488 182h1v1h-1zM488 197h1v1h-1zM488 213h1v1h-1zM488 229h1v1h-1zM488 245h1v1h-1zM488 261h1v1h-1zM488 276h1v1h-1zM488 292h1v1h-1zM488 308h1v1h-1zM488 324h1v1h-1zM488 340h1v1h-1zM488 355h1v1h-1zM488 371h1v1h-1zM488 387h1v1h-1zM488 403h1v1h-1zM488 419h1v1h-1zM488 434h1v1h-1zM488 450h1v1h-1zM488 466h1v1h-1zM504 150h1v1h-1zM504 166h1v1h-1zM504 182h1v1h-1zM504 197h1v1h-1zM504 213h1v1h-1zM504 229h1v1h-1zM504 245h1v1h-1zM504 261h1v1h-1zM504 276h1v1h-1zM504 292h1v1h-1zM504 308h1v1h-1zM504 324h1v1h-1zM504 340h1v1h-1zM504 355h1v1h-1zM504 371h1v1h-1zM504 387h1v1h-1zM504 403h1v1h-1zM504 419h1v1h-1zM504 434h1v1h-1zM504 450h1v1h-1zM504 466h1v1h-1zM520 150h1v1h-1zM520 166h1v1h-1zM520 182h1v1h-1zM520 197h1v1h-1zM520 213h1v1h-1zM520 229h1v1h-1zM520 245h1v1h-1zM520 261h1v1h-1zM520 276h1v1h-1zM520 292h1v1h-1zM520 308h1v1h-1zM520 324h1v1h-1zM520 340h1v1h-1zM520 355h1v1h-1zM520 371h1v1h-1zM520 387h1v1h-1zM520 403h1v1h-1zM520 419h1v1h-1zM520 434h1v1h-1zM520 450h1v1h-1zM520 466h1v1h-1zM536 150h1v1h-1zM536 166h1v1h-1zM536 182h1v1h-1zM536 197h1v1h-1zM536 213h1v1h-1zM536 229h1v1h-1zM536 245h1v1h-1zM536 261h1v1h-1zM536 276h1v1h-1zM536 292h1v1h-1zM536 308h1v1h-1zM536 324h1v1h-1zM536 340h1v1h-1zM536 355h1v1h-1zM536 371h1v1h-1zM536 387h1v1h-1zM536 403h1v1h-1zM536 419h1v1h-1zM536 434h1v1h-1zM536 450h1v1h-1zM536 466h1v1h-1zM551 150h1v1h-1zM551 166h1v1h-1zM551 182h1v1h-1zM551 197h1v1h-1zM551 213h1v1h-1zM551 229h1v1h-1zM551 245h1v1h-1zM551 261h1v1h-1zM551 276h1v1h-1zM551 292h1v1h-1zM551 308h1v1h-1zM551 324h1v1h-1zM551 340h1v1h-1zM551 355h1v1h-1zM551 371h1v1h-1zM551 387h1v1h-1zM551 403h1v1h-1zM551 419h1v1h-1zM551 434h1v1h-1zM551 450h1v1h-1zM551 466h1v1h-1zM567 150h1v1h-1zM567 166h1v1h-1zM567 182h1v1h-1zM567 197h1v1h-1zM567 213h1v1h-1zM567 229h1v1h-1zM567 245h1v1h-1zM567 261h1v1h-1zM567 276h1v1h-1zM567 292h1v1h-1zM567 308h1v1h-1zM567 324h1v1h-1zM567 340h1v1h-1zM567 355h1v1h-1zM567 371h1v1h-1zM567 387h1v1h-1zM567 403h1v1h-1zM567 419h1v1h-1zM567 434h1v1h-1zM567 450h1v1h-1zM567 466h1v1h-1zM583 150h1v1h-1zM583 166h1v1h-1zM583 182h1v1h-1zM583 197h1v1h-1zM583 213h1v1h-1zM583 229h1v1h-1zM583 245h1v1h-1zM583 261h1v1h-1zM583 276h1v1h-1zM583 292h1v1h-1zM583 308h1v1h-1zM583 324h1v1h-1zM583 340h1v1h-1zM583 355h1v1h-1zM583 371h1v1h-1zM583 387h1v1h-1zM583 403h1v1h-1zM583 419h1v1h-1zM583 434h1v1h-1zM583 450h1v1h-1zM583 466h1v1h-1zM599 150h1v1h-1zM599 166h1v1h-1zM599 182h1v1h-1zM599 197h1v1h-1zM599 213h1v1h-1zM599 229h1v1h-1zM599 245h1v1h-1zM599 261h1v1h-1zM599 276h1v1h-1zM599 292h1v1h-1zM599 308h1v1h-1zM599 324h1v1h-1zM599 340h1v1h-1zM599 355h1v1h-1zM599 371h1v1h-1zM599 387h1v1h-1zM599 403h1v1h-1zM599 419h1v1h-1zM599 434h1v1h-1zM599 450h1v1h-1zM599 466h1v1h-1zM615 150h1v1h-1zM615 166h1v1h-1zM615 182h1v1h-1zM615 197h1v1h-1zM615 213h1v1h-1zM615 229h1v1h-1zM615 245h1v1h-1zM615 261h1v1h-1zM615 276h1v1h-1zM615 292h1v1h-1zM615 308h1v1h-1zM615 324h1v1h-1zM615 340h1v1h-1zM615 355h1v1h-1zM615 371h1v1h-1zM615 387h1v1h-1zM615 403h1v1h-1zM615 419h1v1h-1zM615 434h1v1h-1zM615 450h1v1h-1zM615 466h1v1h-1zM630 150h1v1h-1zM630 166h1v1h-1zM630 182h1v1h-1zM630 197h1v1h-1zM630 213h1v1h-1zM630 229h1v1h-1zM630 245h1v1h-1zM630 261h1v1h-1zM630 276h1v1h-1zM630 292h1v1h-1zM630 308h1v1h-1zM630 324h1v1h-1zM630 340h1v1h-1zM630 355h1v1h-1zM630 371h1v1h-1zM630 387h1v1h-1zM630 403h1v1h-1zM630 419h1v1h-1zM630 434h1v1h-1zM630 450h1v1h-1zM630 466h1v1h-1zM646 150h1v1h-1zM646 166h1v1h-1zM646 182h1v1h-1zM646 197h1v1h-1zM646 213h1v1h-1zM646 229h1v1h-1zM646 245h1v1h-1zM646 261h1v1h-1zM646 276h1v1h-1zM646 292h1v1h-1zM646 308h1v1h-1zM646 324h1v1h-1zM646 340h1v1h-1zM646 355h1v1h-1zM646 371h1v1h-1zM646 387h1v1h-1zM646 403h1v1h-1zM646 419h1v1h-1zM646 434h1v1h-1zM646 450h1v1h-1zM646 466h1v1h-1zM662 150h1v1h-1zM662 166h1v1h-1zM662 182h1v1h-1zM662 197h1v1h-1zM662 213h1v1h-1zM662 229h1v1h-1zM662 245h1v1h-1zM662 261h1v1h-1zM662 276h1v1h-1zM662 292h1v1h-1zM662 308h1v1h-1zM662 324h1v1h-1zM662 340h1v1h-1zM662 355h1v1h-1zM662 371h1v1h-1zM662 387h1v1h-1zM662 403h1v1h-1zM662 419h1v1h-1zM662 434h1v1h-1zM662 450h1v1h-1zM662 466h1v1h-1zM678 150h1v1h-1zM678 166h1v1h-1zM678 182h1v1h-1zM678 197h1v1h-1zM678 213h1v1h-1zM678 229h1v1h-1zM678 245h1v1h-1zM678 261h1v1h-1zM678 276h1v1h-1zM678 292h1v1h-1zM678 308h1v1h-1zM678 324h1v1h-1zM678 340h1v1h-1zM678 355h1v1h-1zM678 371h1v1h-1zM678 387h1v1h-1zM678 403h1v1h-1zM678 419h1v1h-1zM678 434h1v1h-1zM678 450h1v1h-1zM678 466h1v1h-1zM694 150h1v1h-1zM694 166h1v1h-1zM694 182h1v1h-1zM694 197h1v1h-1zM694 213h1v1h-1zM694 229h1v1h-1zM694 245h1v1h-1zM694 261h1v1h-1zM694 276h1v1h-1zM694 292h1v1h-1zM694 308h1v1h-1zM694 324h1v1h-1zM694 340h1v1h-1zM694 355h1v1h-1zM694 371h1v1h-1zM694 387h1v1h-1zM694 403h1v1h-1zM694 419h1v1h-1zM694 434h1v1h-1zM694 450h1v1h-1zM694 466h1v1h-1zM709 150h1v1h-1zM709 166h1v1h-1zM709 182h1v1h-1zM709 197h1v1h-1zM709 213h1v1h-1zM709 229h1v1h-1zM709 245h1v1h-1zM709 261h1v1h-1zM709 276h1v1h-1zM709 292h1v1h-1zM709 308h1v1h-1zM709 324h1v1h-1zM709 340h1v1h-1zM709 355h1v1h-1zM709 371h1v1h-1zM709 387h1v1h-1zM709 403h1v1h-1zM709 419h1v1h-1zM709 434h1v1h-1zM709 450h1v1h-1zM709 466h1v1h-1zM725 150h1v1h-1zM725 166h1v1h-1zM725 182h1v1h-1zM725 197h1v1h-1zM725 213h1v1h-1zM725 229h1v1h-1zM725 245h1v1h-1zM725 261h1v1h-1zM725 276h1v1h-1zM725 292h1v1h-1zM725 308h1v1h-1zM725 324h1v1h-1zM725 340h1v1h-1zM725 355h1v1h-1zM725 371h1v1h-1zM725 387h1v1h-1zM725 403h1v1h-1zM725 419h1v1h-1zM725 434h1v1h-1zM725 450h1v1h-1zM725 466h1v1h-1zM741 150h1v1h-1zM741 166h1v1h-1zM741 182h1v1h-1zM741 197h1v1h-1zM741 213h1v1h-1zM741 229h1v1h-1zM741 245h1v1h-1zM741 261h1v1h-1zM741 276h1v1h-1zM741 292h1v1h-1zM741 308h1v1h-1zM741 324h1v1h-1zM741 340h1v1h-1zM741 355h1v1h-1zM741 371h1v1h-1zM741 387h1v1h-1zM741 403h1v1h-1zM741 419h1v1h-1zM741 434h1v1h-1zM741 450h1v1h-1zM741 466h1v1h-1zM757 150h1v1h-1zM757 166h1v1h-1zM757 182h1v1h-1zM757 197h1v1h-1zM757 213h1v1h-1zM757 229h1v1h-1zM757 245h1v1h-1zM757 261h1v1h-1zM757 276h1v1h-1zM757 292h1v1h-1zM757 308h1v1h-1zM757 324h1v1h-1zM757 340h1v1h-1zM757 355h1v1h-1zM757 371h1v1h-1zM757 387h1v1h-1zM757 403h1v1h-1zM757 419h1v1h-1zM757 434h1v1h-1zM757 450h1v1h-1zM757 466h1v1h-1zM773 150h1v1h-1zM773 166h1v1h-1zM773 182h1v1h-1zM773 197h1v1h-1zM773 213h1v1h-1zM773 229h1v1h-1zM773 245h1v1h-1zM773 261h1v1h-1zM773 276h1v1h-1zM773 292h1v1h-1zM773 308h1v1h-1zM773 324h1v1h-1zM773 340h1v1h-1zM773 355h1v1h-1zM773 371h1v1h-1zM773 387h1v1h-1zM773 403h1v1h-1zM773 419h1v1h-1zM773 434h1v1h-1zM773 450h1v1h-1zM773 466h1v1h-1zM788 150h1v1h-1zM788 166h1v1h-1zM788 182h1v1h-1zM788 197h1v1h-1zM788 213h1v1h-1zM788 229h1v1h-1zM788 245h1v1h-1zM788 261h1v1h-1zM788 276h1v1h-1zM788 292h1v1h-1zM788 308h1v1h-1zM788 324h1v1h-1zM788 340h1v1h-1zM788 355h1v1h-1zM788 371h1v1h-1zM788 387h1v1h-1zM788 403h1v1h-1zM788 419h1v1h-1zM788 434h1v1h-1zM788 450h1v1h-1zM788 466h1v1h-1zM804 150h1v1h-1zM804 166h1v1h-1zM804 182h1v1h-1zM804 197h1v1h-1zM804 213h1v1h-1zM804 229h1v1h-1zM804 245h1v1h-1zM804 261h1v1h-1zM804 276h1v1h-1zM804 292h1v1h-1zM804 308h1v1h-1zM804 324h1v1h-1zM804 340h1v1h-1zM804 355h1v1h-1zM804 371h1v1h-1zM804 387h1v1h-1zM804 403h1v1h-1zM804 419h1v1h-1zM804 434h1v1h-1zM804 450h1v1h-1zM804 466h1v1h-1zM820 150h1v1h-1zM820 166h1v1h-1zM820 182h1v1h-1zM820 197h1v1h-1zM820 213h1v1h-1zM820 229h1v1h-1zM820 245h1v1h-1zM820 261h1v1h-1zM820 276h1v1h-1zM820 292h1v1h-1zM820 308h1v1h-1zM820 324h1v1h-1zM820 340h1v1h-1zM820 355h1v1h-1zM820 371h1v1h-1zM820 387h1v1h-1zM820 403h1v1h-1zM820 419h1v1h-1zM820 434h1v1h-1zM820 450h1v1h-1zM820 466h1v1h-1zM836 150h1v1h-1zM836 166h1v1h-1zM836 182h1v1h-1zM836 197h1v1h-1zM836 213h1v1h-1zM836 229h1v1h-1zM836 245h1v1h-1zM836 261h1v1h-1zM836 276h1v1h-1zM836 292h1v1h-1zM836 308h1v1h-1zM836 324h1v1h-1zM836 340h1v1h-1zM836 355h1v1h-1zM836 371h1v1h-1zM836 387h1v1h-1zM836 403h1v1h-1zM836 419h1v1h-1zM836 434h1v1h-1zM836 450h1v1h-1zM836 466h1v1h-1zM852 150h1v1h-1zM852 166h1v1h-1zM852 182h1v1h-1zM852 197h1v1h-1zM852 213h1v1h-1zM852 229h1v1h-1zM852 245h1v1h-1zM852 261h1v1h-1zM852 276h1v1h-1zM852 292h1v1h-1zM852 308h1v1h-1zM852 324h1v1h-1zM852 340h1v1h-1zM852 355h1v1h-1zM852 371h1v1h-1zM852 387h1v1h-1zM852 403h1v1h-1zM852 419h1v1h-1zM852 434h1v1h-1zM852 450h1v1h-1zM852 466h1v1h-1zM867 150h1v1h-1zM867 166h1v1h-1zM867 182h1v1h-1zM867 197h1v1h-1zM867 213h1v1h-1zM867 229h1v1h-1zM867 245h1v1h-1zM867 261h1v1h-1zM867 276h1v1h-1zM867 292h1v1h-1zM867 308h1v1h-1zM867 324h1v1h-1zM867 340h1v1h-1zM867 355h1v1h-1zM867 371h1v1h-1zM867 387h1v1h-1zM867 403h1v1h-1zM867 419h1v1h-1zM867 434h1v1h-1zM867 450h1v1h-1zM867 466h1v1h-1zM883 150h1v1h-1zM883 166h1v1h-1zM883 182h1v1h-1zM883 197h1v1h-1zM883 213h1v1h-1zM883 229h1v1h-1zM883 245h1v1h-1zM883 261h1v1h-1zM883 276h1v1h-1zM883 292h1v1h-1zM883 308h1v1h-1zM883 324h1v1h-1zM883 340h1v1h-1zM883 355h1v1h-1zM883 371h1v1h-1zM883 387h1v1h-1zM883 403h1v1h-1zM883 419h1v1h-1zM883 434h1v1h-1zM883 450h1v1h-1zM883 466h1v1h-1zM899 150h1v1h-1zM899 166h1v1h-1zM899 182h1v1h-1zM899 197h1v1h-1zM899 213h1v1h-1zM899 229h1v1h-1zM899 245h1v1h-1zM899 261h1v1h-1zM899 276h1v1h-1zM899 292h1v1h-1zM899 308h1v1h-1zM899 324h1v1h-1zM899 340h1v1h-1zM899 355h1v1h-1zM899 371h1v1h-1zM899 387h1v1h-1zM899 403h1v1h-1zM899 419h1v1h-1zM899 434h1v1h-1zM899 450h1v1h-1zM899 466h1v1h-1zM915 150h1v1h-1zM915 166h1v1h-1zM915 182h1v1h-1zM915 197h1v1h-1zM915 213h1v1h-1zM915 229h1v1h-1zM915 245h1v1h-1zM915 261h1v1h-1zM915 276h1v1h-1zM915 292h1v1h-1zM915 308h1v1h-1zM915 324h1v1h-1zM915 340h1v1h-1zM915 355h1v1h-1zM915 371h1v1h-1zM915 387h1v1h-1zM915 403h1v1h-1zM915 419h1v1h-1zM915 434h1v1h-1zM915 450h1v1h-1zM915 466h1v1h-1zM931 150h1v1h-1zM931 166h1v1h-1zM931 182h1v1h-1zM931 197h1v1h-1zM931 213h1v1h-1zM931 229h1v1h-1zM931 245h1v1h-1zM931 261h1v1h-1zM931 276h1v1h-1zM931 292h1v1h-1zM931 308h1v1h-1zM931 324h1v1h-1zM931 340h1v1h-1zM931 355h1v1h-1zM931 371h1v1h-1zM931 387h1v1h-1zM931 403h1v1h-1zM931 419h1v1h-1zM931 434h1v1h-1zM931 450h1v1h-1zM931 466h1v1h-1zM946 150h1v1h-1zM946 166h1v1h-1zM946 182h1v1h-1zM946 197h1v1h-1zM946 213h1v1h-1zM946 229h1v1h-1zM946 245h1v1h-1zM946 261h1v1h-1zM946 276h1v1h-1zM946 292h1v1h-1zM946 308h1v1h-1zM946 324h1v1h-1zM946 340h1v1h-1zM946 355h1v1h-1zM946 371h1v1h-1zM946 387h1v1h-1zM946 403h1v1h-1zM946 419h1v1h-1zM946 434h1v1h-1zM946 450h1v1h-1zM946 466h1v1h-1zM962 150h1v1h-1zM962 166h1v1h-1zM962 182h1v1h-1zM962 197h1v1h-1zM962 213h1v1h-1zM962 229h1v1h-1zM962 245h1v1h-1zM962 261h1v1h-1zM962 276h1v1h-1zM962 292h1v1h-1zM962 308h1v1h-1zM962 324h1v1h-1zM962 340h1v1h-1zM962 355h1v1h-1zM962 371h1v1h-1zM962 387h1v1h-1zM962 403h1v1h-1zM962 419h1v1h-1zM962 434h1v1h-1zM962 450h1v1h-1zM962 466h1v1h-1zM978 150h1v1h-1zM978 166h1v1h-1zM978 182h1v1h-1zM978 197h1v1h-1zM978 213h1v1h-1zM978 229h1v1h-1zM978 245h1v1h-1zM978 261h1v1h-1zM978 276h1v1h-1zM978 292h1v1h-1zM978 308h1v1h-1zM978 324h1v1h-1zM978 340h1v1h-1zM978 355h1v1h-1zM978 371h1v1h-1zM978 387h1v1h-1zM978 403h1v1h-1zM978 419h1v1h-1zM978 434h1v1h-1zM978 450h1v1h-1zM978 466h1v1h-1zM994 150h1v1h-1zM994 166h1v1h-1zM994 182h1v1h-1zM994 197h1v1h-1zM994 213h1v1h-1zM994 229h1v1h-1zM994 245h1v1h-1zM994 261h1v1h-1zM994 276h1v1h-1zM994 292h1v1h-1zM994 308h1v1h-1zM994 324h1v1h-1zM994 340h1v1h-1zM994 355h1v1h-1zM994 371h1v1h-1zM994 387h1v1h-1zM994 403h1v1h-1zM994 419h1v1h-1zM994 434h1v1h-1zM994 450h1v1h-1zM994 466h1v1h-1zM1010 150h1v1h-1zM1010 166h1v1h-1zM1010 182h1v1h-1zM1010 197h1v1h-1zM1010 213h1v1h-1zM1010 229h1v1h-1zM1010 245h1v1h-1zM1010 261h1v1h-1zM1010 276h1v1h-1zM1010 292h1v1h-1zM1010 308h1v1h-1zM1010 324h1v1h-1zM1010 340h1v1h-1zM1010 355h1v1h-1zM1010 371h1v1h-1zM1010 387h1v1h-1zM1010 403h1v1h-1zM1010 419h1v1h-1zM1010 434h1v1h-1zM1010 450h1v1h-1zM1010 466h1v1h-1zM1025 150h1v1h-1zM1025 166h1v1h-1zM1025 182h1v1h-1zM1025 197h1v1h-1zM1025 213h1v1h-1zM1025 229h1v1h-1zM1025 245h1v1h-1zM1025 261h1v1h-1zM1025 276h1v1h-1zM1025 292h1v1h-1zM1025 308h1v1h-1zM1025 324h1v1h-1zM1025 340h1v1h-1zM1025 355h1v1h-1zM1025 371h1v1h-1zM1025 387h1v1h-1zM1025 403h1v1h-1zM1025 419h1v1h-1zM1025 434h1v1h-1zM1025 450h1v1h-1zM1025 466h1v1h-1zM1041 150h1v1h-1zM1041 166h1v1h-1zM1041 182h1v1h-1zM1041 197h1v1h-1zM1041 213h1v1h-1zM1041 229h1v1h-1zM1041 245h1v1h-1zM1041 261h1v1h-1zM1041 276h1v1h-1zM1041 292h1v1h-1zM1041 308h1v1h-1zM1041 324h1v1h-1zM1041 340h1v1h-1zM1041 355h1v1h-1zM1041 371h1v1h-1zM1041 387h1v1h-1zM1041 403h1v1h-1zM1041 419h1v1h-1zM1041 434h1v1h-1zM1041 450h1v1h-1zM1041 466h1v1h-1zM1057 150h1v1h-1zM1057 166h1v1h-1zM1057 182h1v1h-1zM1057 197h1v1h-1zM1057 213h1v1h-1zM1057 229h1v1h-1zM1057 245h1v1h-1zM1057 261h1v1h-1zM1057 276h1v1h-1zM1057 292h1v1h-1zM1057 308h1v1h-1zM1057 324h1v1h-1zM1057 340h1v1h-1zM1057 355h1v1h-1zM1057 371h1v1h-1zM1057 387h1v1h-1zM1057 403h1v1h-1zM1057 419h1v1h-1zM1057 434h1v1h-1zM1057 450h1v1h-1zM1057 466h1v1h-1zM1073 150h1v1h-1zM1073 166h1v1h-1zM1073 182h1v1h-1zM1073 197h1v1h-1zM1073 213h1v1h-1zM1073 229h1v1h-1zM1073 245h1v1h-1zM1073 261h1v1h-1zM1073 276h1v1h-1zM1073 292h1v1h-1zM1073 308h1v1h-1zM1073 324h1v1h-1zM1073 340h1v1h-1zM1073 355h1v1h-1zM1073 371h1v1h-1zM1073 387h1v1h-1zM1073 403h1v1h-1zM1073 419h1v1h-1zM1073 434h1v1h-1zM1073 450h1v1h-1zM1073 466h1v1h-1zM1089 150h1v1h-1zM1089 166h1v1h-1zM1089 182h1v1h-1zM1089 197h1v1h-1zM1089 213h1v1h-1zM1089 229h1v1h-1zM1089 245h1v1h-1zM1089 261h1v1h-1zM1089 276h1v1h-1zM1089 292h1v1h-1zM1089 308h1v1h-1zM1089 324h1v1h-1zM1089 340h1v1h-1zM1089 355h1v1h-1zM1089 371h1v1h-1zM1089 387h1v1h-1zM1089 403h1v1h-1zM1089 419h1v1h-1zM1089 434h1v1h-1zM1089 450h1v1h-1zM1089 466h1v1h-1zM1104 150h1v1h-1zM1104 166h1v1h-1zM1104 182h1v1h-1zM1104 197h1v1h-1zM1104 213h1v1h-1zM1104 229h1v1h-1zM1104 245h1v1h-1zM1104 261h1v1h-1zM1104 276h1v1h-1zM1104 292h1v1h-1zM1104 308h1v1h-1zM1104 324h1v1h-1zM1104 340h1v1h-1zM1104 355h1v1h-1zM1104 371h1v1h-1zM1104 387h1v1h-1zM1104 403h1v1h-1zM1104 419h1v1h-1zM1104 434h1v1h-1zM1104 450h1v1h-1zM1104 466h1v1h-1zM1120 150h1v1h-1zM1120 166h1v1h-1zM1120 182h1v1h-1zM1120 197h1v1h-1zM1120 213h1v1h-1zM1120 229h1v1h-1zM1120 245h1v1h-1zM1120 261h1v1h-1zM1120 276h1v1h-1zM1120 292h1v1h-1zM1120 308h1v1h-1zM1120 324h1v1h-1zM1120 340h1v1h-1zM1120 355h1v1h-1zM1120 371h1v1h-1zM1120 387h1v1h-1zM1120 403h1v1h-1zM1120 419h1v1h-1zM1120 434h1v1h-1zM1120 450h1v1h-1zM1120 466h1v1h-1zM1136 150h1v1h-1zM1136 166h1v1h-1zM1136 182h1v1h-1zM1136 197h1v1h-1zM1136 213h1v1h-1zM1136 229h1v1h-1zM1136 245h1v1h-1zM1136 261h1v1h-1zM1136 276h1v1h-1zM1136 292h1v1h-1zM1136 308h1v1h-1zM1136 324h1v1h-1zM1136 340h1v1h-1zM1136 355h1v1h-1zM1136 371h1v1h-1zM1136 387h1v1h-1zM1136 403h1v1h-1zM1136 419h1v1h-1zM1136 434h1v1h-1zM1136 450h1v1h-1zM1136 466h1v1h-1zM1152 150h1v1h-1zM1152 166h1v1h-1zM1152 182h1v1h-1zM1152 197h1v1h-1zM1152 213h1v1h-1zM1152 229h1v1h-1zM1152 245h1v1h-1zM1152 261h1v1h-1zM1152 276h1v1h-1zM1152 292h1v1h-1zM1152 308h1v1h-1zM1152 324h1v1h-1zM1152 340h1v1h-1zM1152 355h1v1h-1zM1152 371h1v1h-1zM1152 387h1v1h-1zM1152 403h1v1h-1zM1152 419h1v1h-1zM1152 434h1v1h-1zM1152 450h1v1h-1zM1152 466h1v1h-1zM1168 150h1v1h-1zM1168 166h1v1h-1zM1168 182h1v1h-1zM1168 197h1v1h-1zM1168 213h1v1h-1zM1168 229h1v1h-1zM1168 245h1v1h-1zM1168 261h1v1h-1zM1168 276h1v1h-1zM1168 292h1v1h-1zM1168 308h1v1h-1zM1168 324h1v1h-1zM1168 340h1v1h-1zM1168 355h1v1h-1zM1168 371h1v1h-1zM1168 387h1v1h-1zM1168 403h1v1h-1zM1168 419h1v1h-1zM1168 434h1v1h-1zM1168 450h1v1h-1zM1168 466h1v1h-1zM1183 150h1v1h-1zM1183 166h1v1h-1zM1183 182h1v1h-1zM1183 197h1v1h-1zM1183 213h1v1h-1zM1183 229h1v1h-1zM1183 245h1v1h-1zM1183 261h1v1h-1zM1183 276h1v1h-1zM1183 292h1v1h-1zM1183 308h1v1h-1zM1183 324h1v1h-1zM1183 340h1v1h-1zM1183 355h1v1h-1zM1183 371h1v1h-1zM1183 387h1v1h-1zM1183 403h1v1h-1zM1183 419h1v1h-1zM1183 434h1v1h-1zM1183 450h1v1h-1zM1183 466h1v1h-1zM1199 150h1v1h-1zM1199 166h1v1h-1zM1199 182h1v1h-1zM1199 197h1v1h-1zM1199 213h1v1h-1zM1199 229h1v1h-1zM1199 245h1v1h-1zM1199 261h1v1h-1zM1199 276h1v1h-1zM1199 292h1v1h-1zM1199 308h1v1h-1zM1199 324h1v1h-1zM1199 340h1v1h-1zM1199 355h1v1h-1zM1199 371h1v1h-1zM1199 387h1v1h-1zM1199 403h1v1h-1zM1199 419h1v1h-1zM1199 434h1v1h-1zM1199 450h1v1h-1zM1199 466h1v1h-1zM1215 150h1v1h-1zM1215 166h1v1h-1zM1215 182h1v1h-1zM1215 197h1v1h-1zM1215 213h1v1h-1zM1215 229h1v1h-1zM1215 245h1v1h-1zM1215 261h1v1h-1zM1215 276h1v1h-1zM1215 292h1v1h-1zM1215 308h1v1h-1zM1215 324h1v1h-1zM1215 340h1v1h-1zM1215 355h1v1h-1zM1215 371h1v1h-1zM1215 387h1v1h-1zM1215 403h1v1h-1zM1215 419h1v1h-1zM1215 434h1v1h-1zM1215 450h1v1h-1zM1215 466h1v1h-1zM1231 150h1v1h-1zM1231 166h1v1h-1zM1231 182h1v1h-1zM1231 197h1v1h-1zM1231 213h1v1h-1zM1231 229h1v1h-1zM1231 245h1v1h-1zM1231 261h1v1h-1zM1231 276h1v1h-1zM1231 292h1v1h-1zM1231 308h1v1h-1zM1231 324h1v1h-1zM1231 340h1v1h-1zM1231 355h1v1h-1zM1231 371h1v1h-1zM1231 387h1v1h-1zM1231 403h1v1h-1zM1231 419h1v1h-1zM1231 434h1v1h-1zM1231 450h1v1h-1zM1231 466h1v1h-1zM1247 150h1v1h-1zM1247 166h1v1h-1zM1247 182h1v1h-1zM1247 197h1v1h-1zM1247 213h1v1h-1zM1247 229h1v1h-1zM1247 245h1v1h-1zM1247 261h1v1h-1zM1247 276h1v1h-1zM1247 292h1v1h-1zM1247 308h1v1h-1zM1247 324h1v1h-1zM1247 340h1v1h-1zM1247 355h1v1h-1zM1247 371h1v1h-1zM1247 387h1v1h-1zM1247 403h1v1h-1zM1247 419h1v1h-1zM1247 434h1v1h-1zM1247 450h1v1h-1zM1247 466h1v1h-1zM1262 150h1v1h-1zM1262 166h1v1h-1zM1262 182h1v1h-1zM1262 197h1v1h-1zM1262 213h1v1h-1zM1262 229h1v1h-1zM1262 245h1v1h-1zM1262 261h1v1h-1zM1262 276h1v1h-1zM1262 292h1v1h-1zM1262 308h1v1h-1zM1262 324h1v1h-1zM1262 340h1v1h-1zM1262 355h1v1h-1zM1262 371h1v1h-1zM1262 387h1v1h-1zM1262 403h1v1h-1zM1262 419h1v1h-1zM1262 434h1v1h-1zM1262 450h1v1h-1zM1262 466h1v1h-1zM1278 150h1v1h-1zM1278 166h1v1h-1zM1278 182h1v1h-1zM1278 197h1v1h-1zM1278 213h1v1h-1zM1278 229h1v1h-1zM1278 245h1v1h-1zM1278 261h1v1h-1zM1278 276h1v1h-1zM1278 292h1v1h-1zM1278 308h1v1h-1zM1278 324h1v1h-1zM1278 340h1v1h-1zM1278 355h1v1h-1zM1278 371h1v1h-1zM1278 387h1v1h-1zM1278 403h1v1h-1zM1278 419h1v1h-1zM1278 434h1v1h-1zM1278 450h1v1h-1zM1278 466h1v1h-1zM1294 150h1v1h-1zM1294 166h1v1h-1zM1294 182h1v1h-1zM1294 197h1v1h-1zM1294 213h1v1h-1zM1294 229h1v1h-1zM1294 245h1v1h-1zM1294 261h1v1h-1zM1294 276h1v1h-1zM1294 292h1v1h-1zM1294 308h1v1h-1zM1294 324h1v1h-1zM1294 340h1v1h-1zM1294 355h1v1h-1zM1294 371h1v1h-1zM1294 387h1v1h-1zM1294 403h1v1h-1zM1294 419h1v1h-1zM1294 434h1v1h-1zM1294 450h1v1h-1zM1294 466h1v1h-1zM1310 150h1v1h-1zM1310 166h1v1h-1zM1310 182h1v1h-1zM1310 197h1v1h-1zM1310 213h1v1h-1zM1310 229h1v1h-1zM1310 245h1v1h-1zM1310 261h1v1h-1zM1310 276h1v1h-1zM1310 292h1v1h-1zM1310 308h1v1h-1zM1310 324h1v1h-1zM1310 340h1v1h-1zM1310 355h1v1h-1zM1310 371h1v1h-1zM1310 387h1v1h-1zM1310 403h1v1h-1zM1310 419h1v1h-1zM1310 434h1v1h-1zM1310 450h1v1h-1zM1310 466h1v1h-1zM1326 150h1v1h-1zM1326 166h1v1h-1zM1326 182h1v1h-1zM1326 197h1v1h-1zM1326 213h1v1h-1zM1326 229h1v1h-1zM1326 245h1v1h-1zM1326 261h1v1h-1zM1326 276h1v1h-1zM1326 292h1v1h-1zM1326 308h1v1h-1zM1326 324h1v1h-1zM1326 340h1v1h-1zM1326 355h1v1h-1zM1326 371h1v1h-1zM1326 387h1v1h-1zM1326 403h1v1h-1zM1326 419h1v1h-1zM1326 434h1v1h-1zM1326 450h1v1h-1zM1326 466h1v1h-1zM1341 150h1v1h-1zM1341 166h1v1h-1zM1341 182h1v1h-1zM1341 197h1v1h-1zM1341 213h1v1h-1zM1341 229h1v1h-1zM1341 245h1v1h-1zM1341 261h1v1h-1zM1341 276h1v1h-1zM1341 292h1v1h-1zM1341 308h1v1h-1zM1341 324h1v1h-1zM1341 340h1v1h-1zM1341 355h1v1h-1zM1341 371h1v1h-1zM1341 387h1v1h-1zM1341 403h1v1h-1zM1341 419h1v1h-1zM1341 434h1v1h-1zM1341 450h1v1h-1zM1341 466h1v1h-1zM1357 150h1v1h-1zM1357 166h1v1h-1zM1357 182h1v1h-1zM1357 197h1v1h-1zM1357 213h1v1h-1zM1357 229h1v1h-1zM1357 245h1v1h-1zM1357 261h1v1h-1zM1357 276h1v1h-1zM1357 292h1v1h-1zM1357 308h1v1h-1zM1357 324h1v1h-1zM1357 340h1v1h-1zM1357 355h1v1h-1zM1357 371h1v1h-1zM1357 387h1v1h-1zM1357 403h1v1h-1zM1357 419h1v1h-1zM1357 434h1v1h-1zM1357 450h1v1h-1zM1357 466h1v1h-1zM1373 150h1v1h-1zM1373 166h1v1h-1zM1373 182h1v1h-1zM1373 197h1v1h-1zM1373 213h1v1h-1zM1373 229h1v1h-1zM1373 245h1v1h-1zM1373 261h1v1h-1zM1373 276h1v1h-1zM1373 292h1v1h-1zM1373 308h1v1h-1zM1373 324h1v1h-1zM1373 340h1v1h-1zM1373 355h1v1h-1zM1373 371h1v1h-1zM1373 387h1v1h-1zM1373 403h1v1h-1zM1373 419h1v1h-1zM1373 434h1v1h-1zM1373 450h1v1h-1zM1373 466h1v1h-1zM1389 150h1v1h-1zM1389 166h1v1h-1zM1389 182h1v1h-1zM1389 197h1v1h-1zM1389 213h1v1h-1zM1389 229h1v1h-1zM1389 245h1v1h-1zM1389 261h1v1h-1zM1389 276h1v1h-1zM1389 292h1v1h-1zM1389 308h1v1h-1zM1389 324h1v1h-1zM1389 340h1v1h-1zM1389 355h1v1h-1zM1389 371h1v1h-1zM1389 387h1v1h-1zM1389 403h1v1h-1zM1389 419h1v1h-1zM1389 434h1v1h-1zM1389 450h1v1h-1zM1389 466h1v1h-1zM1405 150h1v1h-1zM1405 166h1v1h-1zM1405 182h1v1h-1zM1405 197h1v1h-1zM1405 213h1v1h-1zM1405 229h1v1h-1zM1405 245h1v1h-1zM1405 261h1v1h-1zM1405 276h1v1h-1zM1405 292h1v1h-1zM1405 308h1v1h-1zM1405 324h1v1h-1zM1405 340h1v1h-1zM1405 355h1v1h-1zM1405 371h1v1h-1zM1405 387h1v1h-1zM1405 403h1v1h-1zM1405 419h1v1h-1zM1405 434h1v1h-1zM1405 450h1v1h-1zM1405 466h1v1h-1zM1420 150h1v1h-1zM1420 166h1v1h-1zM1420 182h1v1h-1zM1420 197h1v1h-1zM1420 213h1v1h-1zM1420 229h1v1h-1zM1420 245h1v1h-1zM1420 261h1v1h-1zM1420 276h1v1h-1zM1420 292h1v1h-1zM1420 308h1v1h-1zM1420 324h1v1h-1zM1420 340h1v1h-1zM1420 355h1v1h-1zM1420 371h1v1h-1zM1420 387h1v1h-1zM1420 403h1v1h-1zM1420 419h1v1h-1zM1420 434h1v1h-1zM1420 450h1v1h-1zM1420 466h1v1h-1zM1436 150h1v1h-1zM1436 166h1v1h-1zM1436 182h1v1h-1zM1436 197h1v1h-1zM1436 213h1v1h-1zM1436 229h1v1h-1zM1436 245h1v1h-1zM1436 261h1v1h-1zM1436 276h1v1h-1zM1436 292h1v1h-1zM1436 308h1v1h-1zM1436 324h1v1h-1zM1436 340h1v1h-1zM1436 355h1v1h-1zM1436 371h1v1h-1zM1436 387h1v1h-1zM1436 403h1v1h-1zM1436 419h1v1h-1zM1436 434h1v1h-1zM1436 450h1v1h-1zM1436 466h1v1h-1zM1452 150h1v1h-1zM1452 166h1v1h-1zM1452 182h1v1h-1zM1452 197h1v1h-1zM1452 213h1v1h-1zM1452 229h1v1h-1zM1452 245h1v1h-1zM1452 261h1v1h-1zM1452 276h1v1h-1zM1452 292h1v1h-1zM1452 308h1v1h-1zM1452 324h1v1h-1zM1452 340h1v1h-1zM1452 355h1v1h-1zM1452 371h1v1h-1zM1452 387h1v1h-1zM1452 403h1v1h-1zM1452 419h1v1h-1zM1452 434h1v1h-1zM1452 450h1v1h-1zM1452 466h1v1h-1z" fill="#9c9cb4"/><path d="M313 261h3v1h-3zM314 260h1v3h-1z" fill="#fff"/><path d="M313 387h3v1h-3zM314 386h1v3h-1z" fill="#fff"/><path d="M440 261h3v1h-3zM441 260h1v3h-1z" fill="#fff"/><path d="M440 387h3v1h-3zM441 386h1v3h-1z" fill="#fff"/><path d="M566 261h3v1h-3zM567 260h1v3h-1z" fill="#fff"/><path d="M566 387h3v1h-3zM567 386h1v3h-1z" fill="#fff"/><path d="M693 261h3v1h-3zM694 260h1v3h-1z" fill="#fff"/><path d="M693 387h3v1h-3zM694 386h1v3h-1z" fill="#fff"/><path d="M819 261h3v1h-3zM820 260h1v3h-1z" fill="#fff"/><path d="M819 387h3v1h-3zM820 386h1v3h-1z" fill="#fff"/><path d="M945 261h3v1h-3zM946 260h1v3h-1z" fill="#fff"/><path d="M945 387h3v1h-3zM946 386h1v3h-1z" fill="#fff"/><path d="M1072 261h3v1h-3zM1073 260h1v3h-1z" fill="#fff"/><path d="M1072 387h3v1h-3zM1073 386h1v3h-1z" fill="#fff"/><path d="M1198 261h3v1h-3zM1199 260h1v3h-1z" fill="#fff"/><path d="M1198 387h3v1h-3zM1199 386h1v3h-1z" fill="#fff"/><path d="M1325 261h3v1h-3zM1326 260h1v3h-1z" fill="#fff"/><path d="M1325 387h3v1h-3zM1326 386h1v3h-1z" fill="#fff"/><path d="M1451 261h3v1h-3zM1452 260h1v3h-1z" fill="#fff"/><path d="M1451 387h3v1h-3zM1452 386h1v3h-1z" fill="#fff"/><rect x="239" y="284" width="42" height="1" fill="#10c860"/><rect x="259" y="284" width="1" height="30" fill="#10c860"/><rect x="256" y="313" width="7" height="7" fill="#ff0000"/><rect x="259" y="320" width="1" height="13" fill="#10c860"/><ellipse cx="259.5" cy="340.5" rx="9" ry="8.3" fill="none" stroke="#10c860" stroke-width="1"/><path d="M259.5 334v5M257 336.5h5M257 344.5h5" stroke="#10c860" stroke-width="1"/><rect x="259" y="349" width="1" height="12" fill="#10c860"/><rect x="256" y="360" width="7" height="7" fill="#ff0000"/><rect x="259" y="367" width="1" height="21" fill="#10c860"/><path d="M251 387.5H268L259.5 395.5Z" fill="none" stroke="#10c860" stroke-width="1"/><text x="267.5" y="301" fill="#ff0000" font-size="8.5" font-weight="bold" font-family="Liberation Mono" textLength="13.5" lengthAdjust="spacingAndGlyphs">vdd</text><text x="232.5" y="325.2" fill="#f5e8c8" font-size="9" font-weight="bold" font-family="Liberation Mono" textLength="18" lengthAdjust="spacingAndGlyphs">vdd!</text><text x="263.5" y="325.2" fill="#ff0000" font-size="10.5" font-weight="bold" font-family="Liberation Mono" textLength="10.5" lengthAdjust="spacingAndGlyphs">V0</text><text x="271.5" y="337.2" fill="#ff9410" font-size="10" font-weight="bold" font-family="Liberation Mono" textLength="29.5" lengthAdjust="spacingAndGlyphs">vdc=5</text><text x="231" y="365" fill="#f5e8c8" font-size="9.5" font-weight="bold" font-family="Liberation Mono" textLength="19" lengthAdjust="spacingAndGlyphs">gnd!</text><text x="268" y="380.3" fill="#ff0000" font-size="9.5" font-weight="bold" font-family="Liberation Mono" textLength="14" lengthAdjust="spacingAndGlyphs">gnd</text><polygon points="320,283 322,281 800,281 800,288 322,288 320,286" fill="#3bbdf7"/><rect x="322" y="288" width="1" height="57" fill="#3bbdf7"/><rect x="319" y="345" width="7" height="7" fill="#ff0000"/><rect x="322" y="352" width="1" height="12" fill="#10c860"/><ellipse cx="322.5" cy="372.0" rx="8.6" ry="7.7" fill="none" stroke="#10c860" stroke-width="1"/><path d="M322.5 364.5v6M320 367.5h5M320 375.5h5" stroke="#10c860" stroke-width="1"/><rect x="322" y="380" width="1" height="12" fill="#10c860"/><rect x="319" y="392" width="7" height="7" fill="#ff0000"/><rect x="322" y="399" width="1" height="21" fill="#10c860"/><path d="M314 419.5H331L322.5 427.5Z" fill="none" stroke="#10c860" stroke-width="1"/><path d="M298 374.5h3.5v-5h4v5h1.5v-5h4v5h2.5" stroke="#10c860" stroke-width="1" fill="none"/><text x="289.8" y="357" fill="#f5e8c8" font-size="11.5" font-family="Liberation Mono" textLength="27.4" lengthAdjust="spacingAndGlyphs">In&lt;7&gt;</text><text x="330" y="357" fill="#ff0000" font-size="11.5" font-family="Liberation Mono" textLength="10.5" lengthAdjust="spacingAndGlyphs">V1</text><text x="335" y="368.2" fill="#ff9410" font-size="9" font-weight="bold" font-family="Liberation Mono" textLength="23" lengthAdjust="spacingAndGlyphs">v1=5</text><text x="335" y="379.7" fill="#ff9410" font-size="9" font-weight="bold" font-family="Liberation Mono" textLength="23" lengthAdjust="spacingAndGlyphs">v2:0</text><text x="335" y="391.6" fill="#ff9410" font-size="9" font-weight="bold" font-family="Liberation Mono" textLength="25" lengthAdjust="spacingAndGlyphs">tr=1n</text><text x="297.8" y="395" fill="#f5e8c8" font-size="10" font-weight="bold" font-family="Liberation Mono" textLength="19.5" lengthAdjust="spacingAndGlyphs">gnd!</text><text x="331" y="411.5" fill="#ff0000" font-size="10" font-weight="bold" font-family="Liberation Mono" textLength="14" lengthAdjust="spacingAndGlyphs">gnd</text><text x="317.8" y="334.2" fill="#3bbdf7" font-size="13.2" font-family="Liberation Mono" textLength="34.2" lengthAdjust="spacingAndGlyphs" transform="rotate(-90 317.8 334.2)">in&lt;7&gt;</text><polygon points="393.25,286.04 392.07,288.89 389.89,291.07 387.04,292.25 383.96,292.25 381.11,291.07 378.93,288.89 377.75,286.04 377.75,282.96 378.93,280.11 381.11,277.93 383.96,276.75 387.04,276.75 389.89,277.93 392.07,280.11 393.25,282.96" fill="#3bbdf7"/><rect x="385" y="288" width="1" height="57" fill="#3bbdf7"/><rect x="382" y="345" width="7" height="7" fill="#ff0000"/><rect x="385" y="352" width="1" height="12" fill="#10c860"/><ellipse cx="385.5" cy="372.0" rx="8.6" ry="7.7" fill="none" stroke="#10c860" stroke-width="1"/><path d="M385.5 364.5v6M383 367.5h5M383 375.5h5" stroke="#10c860" stroke-width="1"/><rect x="385" y="380" width="1" height="12" fill="#10c860"/><rect x="382" y="392" width="7" height="7" fill="#ff0000"/><rect x="385" y="399" width="1" height="21" fill="#10c860"/><path d="M377 419.5H394L385.5 427.5Z" fill="none" stroke="#10c860" stroke-width="1"/><path d="M361 374.5h3.5v-5h4v5h1.5v-5h4v5h2.5" stroke="#10c860" stroke-width="1" fill="none"/><text x="352.8" y="357" fill="#f5e8c8" font-size="11.5" font-family="Liberation Mono" textLength="27.4" lengthAdjust="spacingAndGlyphs">In&lt;6&gt;</text><text x="393" y="357" fill="#ff0000" font-size="11.5" font-family="Liberation Mono" textLength="10.5" lengthAdjust="spacingAndGlyphs">V2</text><text x="398" y="368.2" fill="#ff9410" font-size="9" font-weight="bold" font-family="Liberation Mono" textLength="23" lengthAdjust="spacingAndGlyphs">v1=5</text><text x="398" y="379.7" fill="#ff9410" font-size="9" font-weight="bold" font-family="Liberation Mono" textLength="23" lengthAdjust="spacingAndGlyphs">v2:0</text><text x="398" y="391.6" fill="#ff9410" font-size="9" font-weight="bold" font-family="Liberation Mono" textLength="25" lengthAdjust="spacingAndGlyphs">tr=1n</text><text x="360.8" y="395" fill="#f5e8c8" font-size="10" font-weight="bold" font-family="Liberation Mono" textLength="19.5" lengthAdjust="spacingAndGlyphs">gnd!</text><text x="394" y="411.5" fill="#ff0000" font-size="10" font-weight="bold" font-family="Liberation Mono" textLength="14" lengthAdjust="spacingAndGlyphs">gnd</text><text x="380.8" y="334.2" fill="#3bbdf7" font-size="13.2" font-family="Liberation Mono" textLength="34.2" lengthAdjust="spacingAndGlyphs" transform="rotate(-90 380.8 334.2)">in&lt;6&gt;</text><polygon points="457.25,286.04 456.07,288.89 453.89,291.07 451.04,292.25 447.96,292.25 445.11,291.07 442.93,288.89 441.75,286.04 441.75,282.96 442.93,280.11 445.11,277.93 447.96,276.75 451.04,276.75 453.89,277.93 456.07,280.11 457.25,282.96" fill="#3bbdf7"/><rect x="449" y="288" width="1" height="57" fill="#3bbdf7"/><rect x="446" y="345" width="7" height="7" fill="#ff0000"/><rect x="449" y="352" width="1" height="12" fill="#10c860"/><ellipse cx="449.5" cy="372.0" rx="8.6" ry="7.7" fill="none" stroke="#10c860" stroke-width="1"/><path d="M449.5 364.5v6M447 367.5h5M447 375.5h5" stroke="#10c860" stroke-width="1"/><rect x="449" y="380" width="1" height="12" fill="#10c860"/><rect x="446" y="392" width="7" height="7" fill="#ff0000"/><rect x="449" y="399" width="1" height="21" fill="#10c860"/><path d="M441 419.5H458L449.5 427.5Z" fill="none" stroke="#10c860" stroke-width="1"/><path d="M425 374.5h3.5v-5h4v5h1.5v-5h4v5h2.5" stroke="#10c860" stroke-width="1" fill="none"/><text x="416.8" y="357" fill="#f5e8c8" font-size="11.5" font-family="Liberation Mono" textLength="27.4" lengthAdjust="spacingAndGlyphs">In&lt;5&gt;</text><text x="457" y="357" fill="#ff0000" font-size="11.5" font-family="Liberation Mono" textLength="10.5" lengthAdjust="spacingAndGlyphs">V3</text><text x="462" y="368.2" fill="#ff9410" font-size="9" font-weight="bold" font-family="Liberation Mono" textLength="23" lengthAdjust="spacingAndGlyphs">v1=5</text><text x="462" y="379.7" fill="#ff9410" font-size="9" font-weight="bold" font-family="Liberation Mono" textLength="23" lengthAdjust="spacingAndGlyphs">v2:0</text><text x="462" y="391.6" fill="#ff9410" font-size="9" font-weight="bold" font-family="Liberation Mono" textLength="25" lengthAdjust="spacingAndGlyphs">tr=1n</text><text x="424.8" y="395" fill="#f5e8c8" font-size="10" font-weight="bold" font-family="Liberation Mono" textLength="19.5" lengthAdjust="spacingAndGlyphs">gnd!</text><text x="458" y="411.5" fill="#ff0000" font-size="10" font-weight="bold" font-family="Liberation Mono" textLength="14" lengthAdjust="spacingAndGlyphs">gnd</text><text x="444.8" y="334.2" fill="#3bbdf7" font-size="13.2" font-family="Liberation Mono" textLength="34.2" lengthAdjust="spacingAndGlyphs" transform="rotate(-90 444.8 334.2)">in&lt;5&gt;</text><polygon points="520.25,286.04 519.07,288.89 516.89,291.07 514.04,292.25 510.96,292.25 508.11,291.07 505.93,288.89 504.75,286.04 504.75,282.96 505.93,280.11 508.11,277.93 510.96,276.75 514.04,276.75 516.89,277.93 519.07,280.11 520.25,282.96" fill="#3bbdf7"/><rect x="512" y="288" width="1" height="57" fill="#3bbdf7"/><rect x="509" y="345" width="7" height="7" fill="#ff0000"/><rect x="512" y="352" width="1" height="12" fill="#10c860"/><ellipse cx="512.5" cy="372.0" rx="8.6" ry="7.7" fill="none" stroke="#10c860" stroke-width="1"/><path d="M512.5 364.5v6M510 367.5h5M510 375.5h5" stroke="#10c860" stroke-width="1"/><rect x="512" y="380" width="1" height="12" fill="#10c860"/><rect x="509" y="392" width="7" height="7" fill="#ff0000"/><rect x="512" y="399" width="1" height="21" fill="#10c860"/><path d="M504 419.5H521L512.5 427.5Z" fill="none" stroke="#10c860" stroke-width="1"/><path d="M488 374.5h3.5v-5h4v5h1.5v-5h4v5h2.5" stroke="#10c860" stroke-width="1" fill="none"/><text x="479.8" y="357" fill="#f5e8c8" font-size="11.5" font-family="Liberation Mono" textLength="27.4" lengthAdjust="spacingAndGlyphs">In&lt;4&gt;</text><text x="520" y="357" fill="#ff0000" font-size="11.5" font-family="Liberation Mono" textLength="10.5" lengthAdjust="spacingAndGlyphs">V4</text><text x="525" y="368.2" fill="#ff9410" font-size="9" font-weight="bold" font-family="Liberation Mono" textLength="23" lengthAdjust="spacingAndGlyphs">v1=5</text><text x="525" y="379.7" fill="#ff9410" font-size="9" font-weight="bold" font-family="Liberation Mono" textLength="23" lengthAdjust="spacingAndGlyphs">v2:0</text><text x="525" y="391.6" fill="#ff9410" font-size="9" font-weight="bold" font-family="Liberation Mono" textLength="25" lengthAdjust="spacingAndGlyphs">tr=1n</text><text x="487.8" y="395" fill="#f5e8c8" font-size="10" font-weight="bold" font-family="Liberation Mono" textLength="19.5" lengthAdjust="spacingAndGlyphs">gnd!</text><text x="521" y="411.5" fill="#ff0000" font-size="10" font-weight="bold" font-family="Liberation Mono" textLength="14" lengthAdjust="spacingAndGlyphs">gnd</text><text x="507.8" y="334.2" fill="#3bbdf7" font-size="13.2" font-family="Liberation Mono" textLength="34.2" lengthAdjust="spacingAndGlyphs" transform="rotate(-90 507.8 334.2)">in&lt;4&gt;</text><polygon points="583.25,286.04 582.07,288.89 579.89,291.07 577.04,292.25 573.96,292.25 571.11,291.07 568.93,288.89 567.75,286.04 567.75,282.96 568.93,280.11 571.11,277.93 573.96,276.75 577.04,276.75 579.89,277.93 582.07,280.11 583.25,282.96" fill="#3bbdf7"/><rect x="575" y="288" width="1" height="57" fill="#3bbdf7"/><rect x="572" y="345" width="7" height="7" fill="#ff0000"/><rect x="575" y="352" width="1" height="12" fill="#10c860"/><ellipse cx="575.5" cy="372.0" rx="8.6" ry="7.7" fill="none" stroke="#10c860" stroke-width="1"/><path d="M575.5 364.5v6M573 367.5h5M573 375.5h5" stroke="#10c860" stroke-width="1"/><rect x="575" y="380" width="1" height="12" fill="#10c860"/><rect x="572" y="392" width="7" height="7" fill="#ff0000"/><rect x="575" y="399" width="1" height="21" fill="#10c860"/><path d="M567 419.5H584L575.5 427.5Z" fill="none" stroke="#10c860" stroke-width="1"/><path d="M551 374.5h3.5v-5h4v5h1.5v-5h4v5h2.5" stroke="#10c860" stroke-width="1" fill="none"/><text x="542.8" y="357" fill="#f5e8c8" font-size="11.5" font-family="Liberation Mono" textLength="27.4" lengthAdjust="spacingAndGlyphs">In&lt;3&gt;</text><text x="583" y="357" fill="#ff0000" font-size="11.5" font-family="Liberation Mono" textLength="10.5" lengthAdjust="spacingAndGlyphs">V5</text><text x="588" y="368.2" fill="#ff9410" font-size="9" font-weight="bold" font-family="Liberation Mono" textLength="23" lengthAdjust="spacingAndGlyphs">v1=5</text><text x="588" y="379.7" fill="#ff9410" font-size="9" font-weight="bold" font-family="Liberation Mono" textLength="23" lengthAdjust="spacingAndGlyphs">v2:0</text><text x="588" y="391.6" fill="#ff9410" font-size="9" font-weight="bold" font-family="Liberation Mono" textLength="25" lengthAdjust="spacingAndGlyphs">tr=1n</text><text x="550.8" y="395" fill="#f5e8c8" font-size="10" font-weight="bold" font-family="Liberation Mono" textLength="19.5" lengthAdjust="spacingAndGlyphs">gnd!</text><text x="584" y="411.5" fill="#ff0000" font-size="10" font-weight="bold" font-family="Liberation Mono" textLength="14" lengthAdjust="spacingAndGlyphs">gnd</text><text x="570.8" y="334.2" fill="#3bbdf7" font-size="13.2" font-family="Liberation Mono" textLength="34.2" lengthAdjust="spacingAndGlyphs" transform="rotate(-90 570.8 334.2)">in&lt;3&gt;</text><polygon points="646.25,286.04 645.07,288.89 642.89,291.07 640.04,292.25 636.96,292.25 634.11,291.07 631.93,288.89 630.75,286.04 630.75,282.96 631.93,280.11 634.11,277.93 636.96,276.75 640.04,276.75 642.89,277.93 645.07,280.11 646.25,282.96" fill="#3bbdf7"/><rect x="638" y="288" width="1" height="57" fill="#3bbdf7"/><rect x="635" y="345" width="7" height="7" fill="#ff0000"/><rect x="638" y="352" width="1" height="12" fill="#10c860"/><ellipse cx="638.5" cy="372.0" rx="8.6" ry="7.7" fill="none" stroke="#10c860" stroke-width="1"/><path d="M638.5 364.5v6M636 367.5h5M636 375.5h5" stroke="#10c860" stroke-width="1"/><rect x="638" y="380" width="1" height="12" fill="#10c860"/><rect x="635" y="392" width="7" height="7" fill="#ff0000"/><rect x="638" y="399" width="1" height="21" fill="#10c860"/><path d="M630 419.5H647L638.5 427.5Z" fill="none" stroke="#10c860" stroke-width="1"/><path d="M614 374.5h3.5v-5h4v5h1.5v-5h4v5h2.5" stroke="#10c860" stroke-width="1" fill="none"/><text x="605.8" y="357" fill="#f5e8c8" font-size="11.5" font-family="Liberation Mono" textLength="27.4" lengthAdjust="spacingAndGlyphs">In&lt;2&gt;</text><text x="646" y="357" fill="#ff0000" font-size="11.5" font-family="Liberation Mono" textLength="10.5" lengthAdjust="spacingAndGlyphs">V6</text><text x="651" y="368.2" fill="#ff9410" font-size="9" font-weight="bold" font-family="Liberation Mono" textLength="23" lengthAdjust="spacingAndGlyphs">v1=5</text><text x="651" y="379.7" fill="#ff9410" font-size="9" font-weight="bold" font-family="Liberation Mono" textLength="23" lengthAdjust="spacingAndGlyphs">v2:0</text><text x="651" y="391.6" fill="#ff9410" font-size="9" font-weight="bold" font-family="Liberation Mono" textLength="25" lengthAdjust="spacingAndGlyphs">tr=1n</text><text x="613.8" y="395" fill="#f5e8c8" font-size="10" font-weight="bold" font-family="Liberation Mono" textLength="19.5" lengthAdjust="spacingAndGlyphs">gnd!</text><text x="647" y="411.5" fill="#ff0000" font-size="10" font-weight="bold" font-family="Liberation Mono" textLength="14" lengthAdjust="spacingAndGlyphs">gnd</text><text x="633.8" y="334.2" fill="#3bbdf7" font-size="13.2" font-family="Liberation Mono" textLength="34.2" lengthAdjust="spacingAndGlyphs" transform="rotate(-90 633.8 334.2)">in&lt;2&gt;</text><polygon points="709.25,286.04 708.07,288.89 705.89,291.07 703.04,292.25 699.96,292.25 697.11,291.07 694.93,288.89 693.75,286.04 693.75,282.96 694.93,280.11 697.11,277.93 699.96,276.75 703.04,276.75 705.89,277.93 708.07,280.11 709.25,282.96" fill="#3bbdf7"/><rect x="701" y="288" width="1" height="57" fill="#3bbdf7"/><rect x="698" y="345" width="7" height="7" fill="#ff0000"/><rect x="701" y="352" width="1" height="12" fill="#10c860"/><ellipse cx="701.5" cy="372.0" rx="8.6" ry="7.7" fill="none" stroke="#10c860" stroke-width="1"/><path d="M701.5 364.5v6M699 367.5h5M699 375.5h5" stroke="#10c860" stroke-width="1"/><rect x="701" y="380" width="1" height="12" fill="#10c860"/><rect x="698" y="392" width="7" height="7" fill="#ff0000"/><rect x="701" y="399" width="1" height="21" fill="#10c860"/><path d="M693 419.5H710L701.5 427.5Z" fill="none" stroke="#10c860" stroke-width="1"/><path d="M677 374.5h3.5v-5h4v5h1.5v-5h4v5h2.5" stroke="#10c860" stroke-width="1" fill="none"/><text x="668.8" y="357" fill="#f5e8c8" font-size="11.5" font-family="Liberation Mono" textLength="27.4" lengthAdjust="spacingAndGlyphs">In&lt;1&gt;</text><text x="709" y="357" fill="#ff0000" font-size="11.5" font-family="Liberation Mono" textLength="10.5" lengthAdjust="spacingAndGlyphs">V7</text><text x="714" y="368.2" fill="#ff9410" font-size="9" font-weight="bold" font-family="Liberation Mono" textLength="23" lengthAdjust="spacingAndGlyphs">v1=5</text><text x="714" y="379.7" fill="#ff9410" font-size="9" font-weight="bold" font-family="Liberation Mono" textLength="23" lengthAdjust="spacingAndGlyphs">v2:0</text><text x="714" y="391.6" fill="#ff9410" font-size="9" font-weight="bold" font-family="Liberation Mono" textLength="25" lengthAdjust="spacingAndGlyphs">tr=1n</text><text x="676.8" y="395" fill="#f5e8c8" font-size="10" font-weight="bold" font-family="Liberation Mono" textLength="19.5" lengthAdjust="spacingAndGlyphs">gnd!</text><text x="710" y="411.5" fill="#ff0000" font-size="10" font-weight="bold" font-family="Liberation Mono" textLength="14" lengthAdjust="spacingAndGlyphs">gnd</text><text x="696.8" y="334.2" fill="#3bbdf7" font-size="13.2" font-family="Liberation Mono" textLength="34.2" lengthAdjust="spacingAndGlyphs" transform="rotate(-90 696.8 334.2)">in&lt;1&gt;</text><polygon points="773.25,286.04 772.07,288.89 769.89,291.07 767.04,292.25 763.96,292.25 761.11,291.07 758.93,288.89 757.75,286.04 757.75,282.96 758.93,280.11 761.11,277.93 763.96,276.75 767.04,276.75 769.89,277.93 772.07,280.11 773.25,282.96" fill="#3bbdf7"/><rect x="765" y="288" width="1" height="57" fill="#3bbdf7"/><rect x="762" y="345" width="7" height="7" fill="#ff0000"/><rect x="765" y="352" width="1" height="12" fill="#10c860"/><ellipse cx="765.5" cy="372.0" rx="8.6" ry="7.7" fill="none" stroke="#10c860" stroke-width="1"/><path d="M765.5 364.5v6M763 367.5h5M763 375.5h5" stroke="#10c860" stroke-width="1"/><rect x="765" y="380" width="1" height="12" fill="#10c860"/><rect x="762" y="392" width="7" height="7" fill="#ff0000"/><rect x="765" y="399" width="1" height="21" fill="#10c860"/><path d="M757 419.5H774L765.5 427.5Z" fill="none" stroke="#10c860" stroke-width="1"/><path d="M741 374.5h3.5v-5h4v5h1.5v-5h4v5h2.5" stroke="#10c860" stroke-width="1" fill="none"/><text x="732.8" y="357" fill="#f5e8c8" font-size="11.5" font-family="Liberation Mono" textLength="27.4" lengthAdjust="spacingAndGlyphs">In&lt;0&gt;</text><text x="773" y="357" fill="#ff0000" font-size="11.5" font-family="Liberation Mono" textLength="10.5" lengthAdjust="spacingAndGlyphs">V8</text><text x="778" y="368.2" fill="#ff9410" font-size="9" font-weight="bold" font-family="Liberation Mono" textLength="23" lengthAdjust="spacingAndGlyphs">v1=5</text><text x="778" y="379.7" fill="#ff9410" font-size="9" font-weight="bold" font-family="Liberation Mono" textLength="23" lengthAdjust="spacingAndGlyphs">v2:0</text><text x="778" y="391.6" fill="#ff9410" font-size="9" font-weight="bold" font-family="Liberation Mono" textLength="25" lengthAdjust="spacingAndGlyphs">tr=1n</text><text x="740.8" y="395" fill="#f5e8c8" font-size="10" font-weight="bold" font-family="Liberation Mono" textLength="19.5" lengthAdjust="spacingAndGlyphs">gnd!</text><text x="774" y="411.5" fill="#ff0000" font-size="10" font-weight="bold" font-family="Liberation Mono" textLength="14" lengthAdjust="spacingAndGlyphs">gnd</text><text x="760.8" y="334.2" fill="#3bbdf7" font-size="13.2" font-family="Liberation Mono" textLength="34.2" lengthAdjust="spacingAndGlyphs" transform="rotate(-90 760.8 334.2)">in&lt;0&gt;</text><rect x="793" y="281" width="7" height="7" fill="#ff0000"/><polygon points="731,235 733,233 800,233 800,241 733,241 731,239" fill="#3bbdf7"/><rect x="793" y="234" width="7" height="7" fill="#ff0000"/><rect x="800" y="237" width="29" height="1" fill="#10c860"/><rect x="800" y="284" width="29" height="1" fill="#10c860"/><text x="757.5" y="229" fill="#3bbdf7" font-size="13.6" font-family="Liberation Mono" textLength="45.5" lengthAdjust="spacingAndGlyphs">in&lt;0:7&gt;</text><text x="757.5" y="276" fill="#3bbdf7" font-size="13.6" font-family="Liberation Mono" textLength="45.5" lengthAdjust="spacingAndGlyphs">in&lt;7:0&gt;</text><path d="M828.5 221.5H890.5L909.5 230.5Q920 238 923.5 255V268Q920 285 909.5 291.5L890.5 300.5H828.5Z" fill="none" stroke="#10c860" stroke-width="1"/><path d="M852.8 250.5L864.5 270M864.5 250.5L852.8 270" stroke="#fff" stroke-width="1.1" fill="none"/><ellipse cx="876.7" cy="255" rx="5.3" ry="4.6" fill="none" stroke="#fff" stroke-width="1.1"/><ellipse cx="876.7" cy="264.9" rx="6.4" ry="5.3" fill="none" stroke="#fff" stroke-width="1.1"/><rect x="924" y="261" width="28" height="1" fill="#10c860"/><polygon points="955,257 1366,257 1368,259 1368,263 1366,265 955,265" fill="#3bbdf7"/><rect x="951" y="258" width="7" height="7" fill="#ff0000"/><text x="951" y="252" fill="#3bbdf7" font-size="13.6" font-family="Liberation Mono" textLength="52" lengthAdjust="spacingAndGlyphs">out&lt;7:0&gt;</text><polygon points="986.25,263.04 985.07,265.89 982.89,268.07 980.04,269.25 976.96,269.25 974.11,268.07 971.93,265.89 970.75,263.04 970.75,259.96 971.93,257.11 974.11,254.93 976.96,253.75 980.04,253.75 982.89,254.93 985.07,257.11 986.25,259.96" fill="#3bbdf7"/><rect x="978" y="265" width="1" height="56" fill="#3bbdf7"/><rect x="975" y="321" width="7" height="7" fill="#ff0000"/><rect x="978" y="328" width="1" height="20" fill="#10c860"/><rect x="970.5" y="347.5" width="17" height="17" fill="none" stroke="#10c860" stroke-width="1"/><path d="M970.5 347.5L987.5 364.5M987.5 347.5L970.5 364.5" stroke="#10c860" stroke-width="1"/><text x="974.5" y="314.8" fill="#3bbdf7" font-size="13.2" font-family="Liberation Mono" textLength="43" lengthAdjust="spacingAndGlyphs" transform="rotate(-90 974.5 314.8)">out&lt;7&gt;</text><polygon points="1041.25,263.04 1040.07,265.89 1037.89,268.07 1035.04,269.25 1031.96,269.25 1029.11,268.07 1026.93,265.89 1025.75,263.04 1025.75,259.96 1026.93,257.11 1029.11,254.93 1031.96,253.75 1035.04,253.75 1037.89,254.93 1040.07,257.11 1041.25,259.96" fill="#3bbdf7"/><rect x="1033" y="265" width="1" height="56" fill="#3bbdf7"/><rect x="1030" y="321" width="7" height="7" fill="#ff0000"/><rect x="1033" y="328" width="1" height="20" fill="#10c860"/><rect x="1025.5" y="347.5" width="17" height="17" fill="none" stroke="#10c860" stroke-width="1"/><path d="M1025.5 347.5L1042.5 364.5M1042.5 347.5L1025.5 364.5" stroke="#10c860" stroke-width="1"/><text x="1029.5" y="314.8" fill="#3bbdf7" font-size="13.2" font-family="Liberation Mono" textLength="43" lengthAdjust="spacingAndGlyphs" transform="rotate(-90 1029.5 314.8)">out&lt;6&gt;</text><polygon points="1097.25,263.04 1096.07,265.89 1093.89,268.07 1091.04,269.25 1087.96,269.25 1085.11,268.07 1082.93,265.89 1081.75,263.04 1081.75,259.96 1082.93,257.11 1085.11,254.93 1087.96,253.75 1091.04,253.75 1093.89,254.93 1096.07,257.11 1097.25,259.96" fill="#3bbdf7"/><rect x="1089" y="265" width="1" height="56" fill="#3bbdf7"/><rect x="1086" y="321" width="7" height="7" fill="#ff0000"/><rect x="1089" y="328" width="1" height="20" fill="#10c860"/><rect x="1081.5" y="347.5" width="17" height="17" fill="none" stroke="#10c860" stroke-width="1"/><path d="M1081.5 347.5L1098.5 364.5M1098.5 347.5L1081.5 364.5" stroke="#10c860" stroke-width="1"/><text x="1085.5" y="314.8" fill="#3bbdf7" font-size="13.2" font-family="Liberation Mono" textLength="43" lengthAdjust="spacingAndGlyphs" transform="rotate(-90 1085.5 314.8)">out&lt;5&gt;</text><polygon points="1152.25,263.04 1151.07,265.89 1148.89,268.07 1146.04,269.25 1142.96,269.25 1140.11,268.07 1137.93,265.89 1136.75,263.04 1136.75,259.96 1137.93,257.11 1140.11,254.93 1142.96,253.75 1146.04,253.75 1148.89,254.93 1151.07,257.11 1152.25,259.96" fill="#3bbdf7"/><rect x="1144" y="265" width="1" height="56" fill="#3bbdf7"/><rect x="1141" y="321" width="7" height="7" fill="#ff0000"/><rect x="1144" y="328" width="1" height="20" fill="#10c860"/><rect x="1136.5" y="347.5" width="17" height="17" fill="none" stroke="#10c860" stroke-width="1"/><path d="M1136.5 347.5L1153.5 364.5M1153.5 347.5L1136.5 364.5" stroke="#10c860" stroke-width="1"/><text x="1140.5" y="314.8" fill="#3bbdf7" font-size="13.2" font-family="Liberation Mono" textLength="43" lengthAdjust="spacingAndGlyphs" transform="rotate(-90 1140.5 314.8)">out&lt;4&gt;</text><polygon points="1207.25,263.04 1206.07,265.89 1203.89,268.07 1201.04,269.25 1197.96,269.25 1195.11,268.07 1192.93,265.89 1191.75,263.04 1191.75,259.96 1192.93,257.11 1195.11,254.93 1197.96,253.75 1201.04,253.75 1203.89,254.93 1206.07,257.11 1207.25,259.96" fill="#3bbdf7"/><rect x="1199" y="265" width="1" height="56" fill="#3bbdf7"/><rect x="1196" y="321" width="7" height="7" fill="#ff0000"/><rect x="1199" y="328" width="1" height="20" fill="#10c860"/><rect x="1191.5" y="347.5" width="17" height="17" fill="none" stroke="#10c860" stroke-width="1"/><path d="M1191.5 347.5L1208.5 364.5M1208.5 347.5L1191.5 364.5" stroke="#10c860" stroke-width="1"/><text x="1195.5" y="314.8" fill="#3bbdf7" font-size="13.2" font-family="Liberation Mono" textLength="43" lengthAdjust="spacingAndGlyphs" transform="rotate(-90 1195.5 314.8)">out&lt;3&gt;</text><polygon points="1262.25,263.04 1261.07,265.89 1258.89,268.07 1256.04,269.25 1252.96,269.25 1250.11,268.07 1247.93,265.89 1246.75,263.04 1246.75,259.96 1247.93,257.11 1250.11,254.93 1252.96,253.75 1256.04,253.75 1258.89,254.93 1261.07,257.11 1262.25,259.96" fill="#3bbdf7"/><rect x="1254" y="265" width="1" height="56" fill="#3bbdf7"/><rect x="1251" y="321" width="7" height="7" fill="#ff0000"/><rect x="1254" y="328" width="1" height="20" fill="#10c860"/><rect x="1246.5" y="347.5" width="17" height="17" fill="none" stroke="#10c860" stroke-width="1"/><path d="M1246.5 347.5L1263.5 364.5M1263.5 347.5L1246.5 364.5" stroke="#10c860" stroke-width="1"/><text x="1250.5" y="314.8" fill="#3bbdf7" font-size="13.2" font-family="Liberation Mono" textLength="43" lengthAdjust="spacingAndGlyphs" transform="rotate(-90 1250.5 314.8)">out&lt;2&gt;</text><polygon points="1318.25,263.04 1317.07,265.89 1314.89,268.07 1312.04,269.25 1308.96,269.25 1306.11,268.07 1303.93,265.89 1302.75,263.04 1302.75,259.96 1303.93,257.11 1306.11,254.93 1308.96,253.75 1312.04,253.75 1314.89,254.93 1317.07,257.11 1318.25,259.96" fill="#3bbdf7"/><rect x="1310" y="265" width="1" height="56" fill="#3bbdf7"/><rect x="1307" y="321" width="7" height="7" fill="#ff0000"/><rect x="1310" y="328" width="1" height="20" fill="#10c860"/><rect x="1302.5" y="347.5" width="17" height="17" fill="none" stroke="#10c860" stroke-width="1"/><path d="M1302.5 347.5L1319.5 364.5M1319.5 347.5L1302.5 364.5" stroke="#10c860" stroke-width="1"/><text x="1306.5" y="314.8" fill="#3bbdf7" font-size="13.2" font-family="Liberation Mono" textLength="43" lengthAdjust="spacingAndGlyphs" transform="rotate(-90 1306.5 314.8)">out&lt;1&gt;</text><rect x="1365" y="265" width="1" height="56" fill="#3bbdf7"/><rect x="1362" y="321" width="7" height="7" fill="#ff0000"/><rect x="1365" y="328" width="1" height="20" fill="#10c860"/><rect x="1357.5" y="347.5" width="17" height="17" fill="none" stroke="#10c860" stroke-width="1"/><path d="M1357.5 347.5L1374.5 364.5M1374.5 347.5L1357.5 364.5" stroke="#10c860" stroke-width="1"/><text x="1361.5" y="314.8" fill="#3bbdf7" font-size="13.2" font-family="Liberation Mono" textLength="43" lengthAdjust="spacingAndGlyphs" transform="rotate(-90 1361.5 314.8)">out&lt;0&gt;</text></svg>
</body></html>
